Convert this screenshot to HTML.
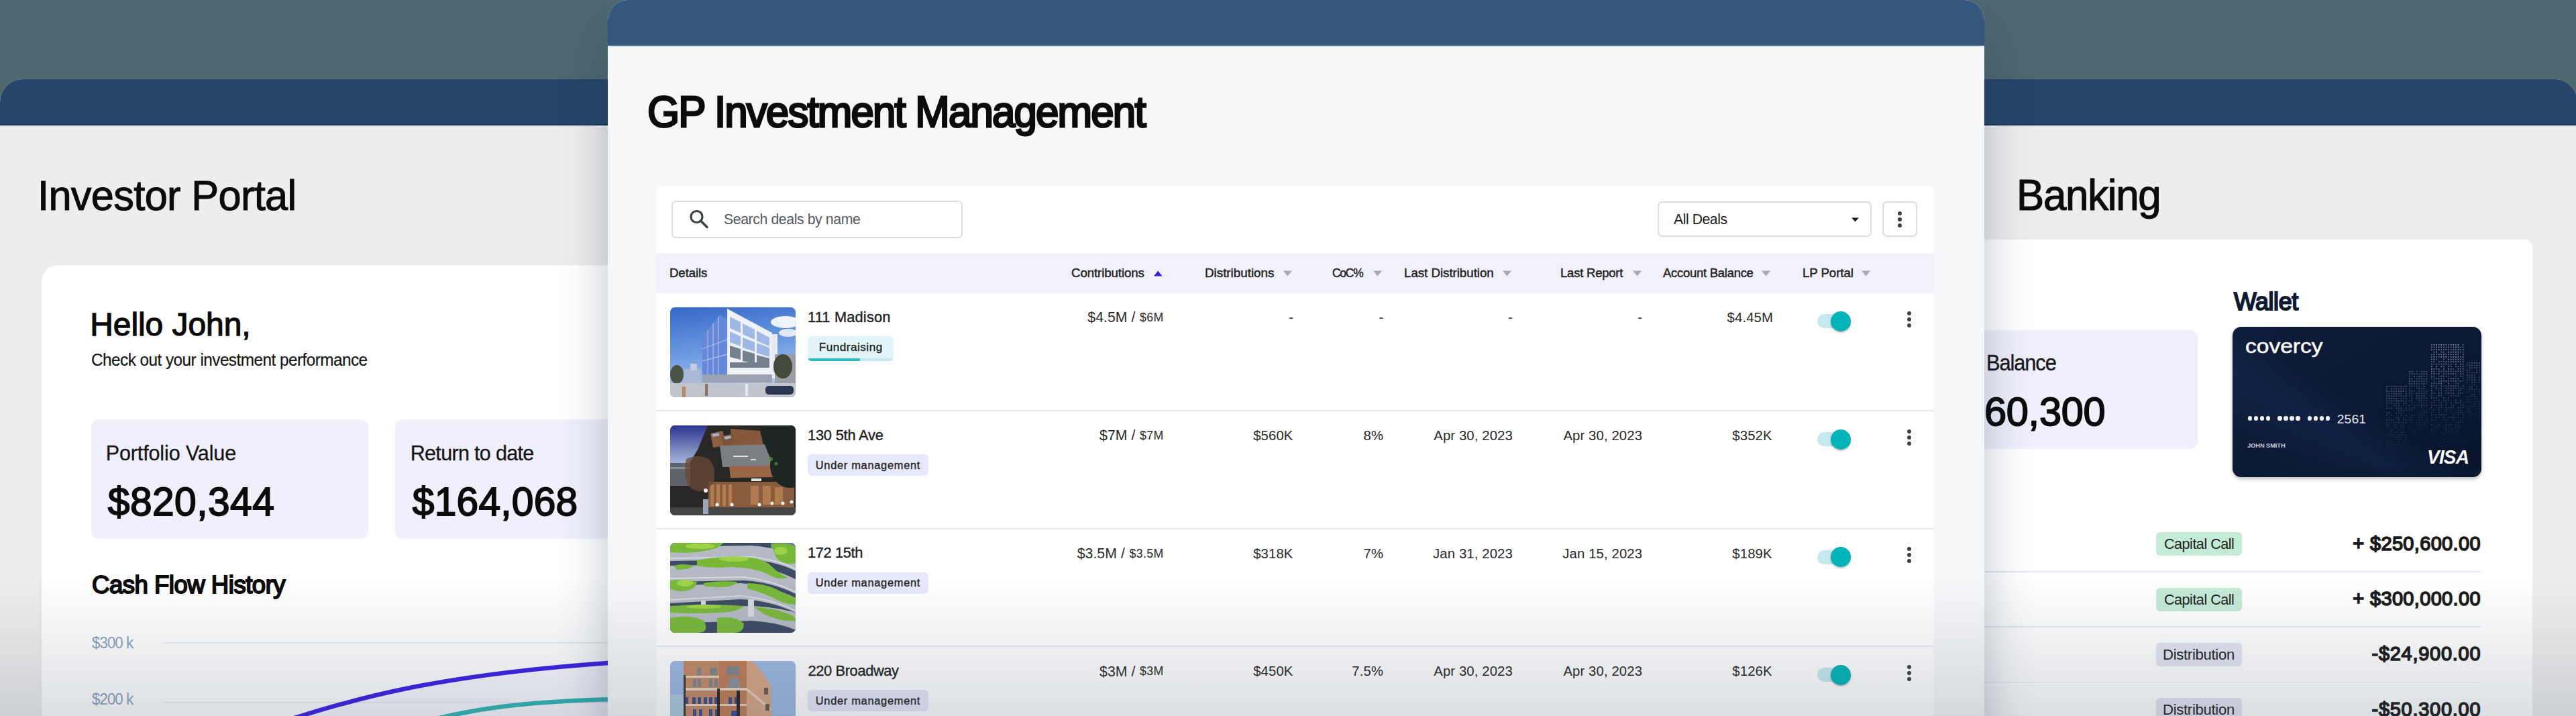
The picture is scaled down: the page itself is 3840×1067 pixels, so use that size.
<!DOCTYPE html><html><head><meta charset="utf-8"><title>GP Investment Management</title><style>
*{margin:0;padding:0;box-sizing:border-box}
html,body{width:3840px;height:1067px;overflow:hidden;background:#4e6870;font-family:"Liberation Sans",sans-serif}
.a{position:absolute}
.t{position:absolute;line-height:1;white-space:nowrap;font-family:"Liberation Sans",sans-serif}
svg{display:block}
</style></head><body>
<div class="a" style="left:0;top:118px;width:3842px;height:1000px;border-radius:34px 34px 0 0;background:#ededed;overflow:hidden"><div class="a" style="left:0;top:0;width:3842px;height:68px;background:#274569"></div><div class="a" style="left:0;top:67px;width:3842px;height:1.5px;background:#1c3454"></div></div>
<div class="a" style="left:62px;top:395px;width:900px;height:720px;border-radius:24px;background:#fff;box-shadow:0 0 3px rgba(0,0,0,0.06)"></div>
<div class="t" style="left:56.42px;top:259.54px;font-size:62.79px;letter-spacing:-0.667px;transform:scaleX(0.9764);transform-origin:0 0;color:#0b0b0b;-webkit-text-stroke:1.1px #0b0b0b">Investor Portal</div>
<div class="t" style="left:134.21px;top:460.39px;font-size:47.97px;letter-spacing:-0.061px;color:#0b0b0b;-webkit-text-stroke:1.3px #0b0b0b">Hello John,</div>
<div class="t" style="left:135.88px;top:523.96px;font-size:25.44px;letter-spacing:-0.551px;transform:scaleX(0.9558);transform-origin:0 0;color:#151515;-webkit-text-stroke:0.2px #151515">Check out your investment performance</div>
<div class="a" style="left:136px;top:625px;width:413px;height:178px;border-radius:12px;background:#f0f0fc"></div>
<div class="a" style="left:589px;top:625px;width:413px;height:178px;border-radius:12px;background:#f0f0fc"></div>
<div class="t" style="left:157.71px;top:659.96px;font-size:30.52px;letter-spacing:-0.125px;color:#151515;-webkit-text-stroke:0.3px #151515">Portfolio Value</div>
<div class="t" style="left:160.81px;top:719.27px;font-size:58.74px;letter-spacing:0.444px;color:#0b0b0b;-webkit-text-stroke:1.8px #0b0b0b">$820,344</div>
<div class="t" style="left:611.71px;top:659.96px;font-size:30.52px;letter-spacing:-0.681px;color:#151515;-webkit-text-stroke:0.3px #151515">Return to date</div>
<div class="t" style="left:614.81px;top:719.27px;font-size:58.74px;letter-spacing:0.199px;color:#0b0b0b;-webkit-text-stroke:1.8px #0b0b0b">$164,068</div>
<div class="t" style="left:137.15px;top:853.07px;font-size:37.35px;letter-spacing:-0.451px;transform:scaleX(0.9762);transform-origin:0 0;color:#0b0b0b;-webkit-text-stroke:2.0px #0b0b0b">Cash Flow History</div>
<div class="t" style="left:136.78px;top:945.69px;font-size:23.98px;letter-spacing:-1.019px;transform:scaleX(0.9291);transform-origin:0 0;color:#8ea2c0">$300 k</div>
<div class="t" style="left:136.78px;top:1029.69px;font-size:23.98px;letter-spacing:-1.019px;transform:scaleX(0.9291);transform-origin:0 0;color:#8ea2c0">$200 k</div>
<div class="a" style="left:244px;top:957px;width:700px;height:1.5px;background:#ecedf2"></div>
<div class="a" style="left:244px;top:1046px;width:700px;height:1.5px;background:#ecedf2"></div>
<svg class="a" style="left:0;top:0" width="1000" height="1067" viewBox="0 0 1000 1067"><path d="M408 1080 C 528 1040, 655 1005, 920 987 L920 1080 Z" fill="#ebe8fb" opacity="0.3"/><path d="M408 1080 C 528 1040, 655 1005, 920 987" fill="none" stroke="#3b1ee6" stroke-width="6.5"/><path d="M615 1080 C 705 1055, 785 1045, 920 1042" fill="none" stroke="#2fb5b5" stroke-width="6.5"/></svg>
<div class="a" style="left:2900px;top:357px;width:875px;height:760px;border-radius:12px;background:#fff"></div>
<div class="t" style="left:3005.64px;top:259.65px;font-size:63.95px;letter-spacing:-1.282px;transform:scaleX(0.9655);transform-origin:0 0;color:#0b0b0b;-webkit-text-stroke:1.2px #0b0b0b">Banking</div>
<div class="a" style="left:2850px;top:492px;width:426px;height:177px;border-radius:12px;background:#f0f0fc"></div>
<div class="t" style="left:2960.67px;top:524.79px;font-size:32.85px;letter-spacing:-1.173px;transform:scaleX(0.9388);transform-origin:0 0;color:#151515;-webkit-text-stroke:0.3px #151515">Balance</div>
<div class="t" style="left:2957.52px;top:584.30px;font-size:59.89px;letter-spacing:-0.257px;transform:scaleX(0.9929);transform-origin:0 0;color:#0b0b0b;-webkit-text-stroke:1.8px #0b0b0b">60,300</div>
<div class="t" style="left:3329.80px;top:431.61px;font-size:36.48px;letter-spacing:-0.394px;transform:scaleX(0.9806);transform-origin:0 0;color:#0f1a30;-webkit-text-stroke:2.0px #0f1a30">Wallet</div>
<div class="a" style="left:3328px;top:487px;width:371px;height:224px;border-radius:13px;box-shadow:0 3px 5px rgba(0,0,0,0.25);overflow:hidden"><svg width="371" height="224" viewBox="0 0 371 224">
<defs><linearGradient id="cg" x1="0" y1="0" x2="1" y2="1"><stop offset="0" stop-color="#0e1d3a"/><stop offset="1" stop-color="#09142c"/></linearGradient>
<linearGradient id="cs" x1="0" y1="1" x2="1" y2="0"><stop offset="0.1" stop-color="#1c3466" stop-opacity="0"/><stop offset="0.35" stop-color="#1c3466" stop-opacity="0.3"/><stop offset="0.5" stop-color="#1c3466" stop-opacity="0"/></linearGradient></defs>
<rect width="371" height="224" fill="url(#cg)"/>
<rect width="371" height="224" fill="url(#cs)"/>
<g fill="#9db0cc"><rect x="229.0" y="88.0" width="1.7" height="1.7" opacity="0.36"/><rect x="232.6" y="88.0" width="1.7" height="1.7" opacity="0.35"/><rect x="236.2" y="88.0" width="1.7" height="1.7" opacity="0.41"/><rect x="239.8" y="88.0" width="1.7" height="1.7" opacity="0.44"/><rect x="243.4" y="88.0" width="1.7" height="1.7" opacity="0.43"/><rect x="247.0" y="88.0" width="1.7" height="1.7" opacity="0.35"/><rect x="250.6" y="88.0" width="1.7" height="1.7" opacity="0.51"/><rect x="254.2" y="88.0" width="1.7" height="1.7" opacity="0.38"/><rect x="257.8" y="88.0" width="1.7" height="1.7" opacity="0.54"/><rect x="229.0" y="91.6" width="1.7" height="1.7" opacity="0.41"/><rect x="236.2" y="91.6" width="1.7" height="1.7" opacity="0.50"/><rect x="239.8" y="91.6" width="1.7" height="1.7" opacity="0.35"/><rect x="243.4" y="91.6" width="1.7" height="1.7" opacity="0.39"/><rect x="247.0" y="91.6" width="1.7" height="1.7" opacity="0.36"/><rect x="250.6" y="91.6" width="1.7" height="1.7" opacity="0.46"/><rect x="254.2" y="91.6" width="1.7" height="1.7" opacity="0.44"/><rect x="257.8" y="91.6" width="1.7" height="1.7" opacity="0.33"/><rect x="229.0" y="95.2" width="1.7" height="1.7" opacity="0.45"/><rect x="232.6" y="95.2" width="1.7" height="1.7" opacity="0.38"/><rect x="236.2" y="95.2" width="1.7" height="1.7" opacity="0.40"/><rect x="239.8" y="95.2" width="1.7" height="1.7" opacity="0.48"/><rect x="243.4" y="95.2" width="1.7" height="1.7" opacity="0.36"/><rect x="247.0" y="95.2" width="1.7" height="1.7" opacity="0.42"/><rect x="250.6" y="95.2" width="1.7" height="1.7" opacity="0.46"/><rect x="254.2" y="95.2" width="1.7" height="1.7" opacity="0.51"/><rect x="257.8" y="95.2" width="1.7" height="1.7" opacity="0.40"/><rect x="229.0" y="98.8" width="1.7" height="1.7" opacity="0.33"/><rect x="232.6" y="98.8" width="1.7" height="1.7" opacity="0.31"/><rect x="236.2" y="98.8" width="1.7" height="1.7" opacity="0.45"/><rect x="239.8" y="98.8" width="1.7" height="1.7" opacity="0.48"/><rect x="243.4" y="98.8" width="1.7" height="1.7" opacity="0.44"/><rect x="247.0" y="98.8" width="1.7" height="1.7" opacity="0.42"/><rect x="250.6" y="98.8" width="1.7" height="1.7" opacity="0.47"/><rect x="257.8" y="98.8" width="1.7" height="1.7" opacity="0.43"/><rect x="229.0" y="102.4" width="1.7" height="1.7" opacity="0.42"/><rect x="232.6" y="102.4" width="1.7" height="1.7" opacity="0.48"/><rect x="236.2" y="102.4" width="1.7" height="1.7" opacity="0.34"/><rect x="239.8" y="102.4" width="1.7" height="1.7" opacity="0.42"/><rect x="243.4" y="102.4" width="1.7" height="1.7" opacity="0.38"/><rect x="247.0" y="102.4" width="1.7" height="1.7" opacity="0.31"/><rect x="250.6" y="102.4" width="1.7" height="1.7" opacity="0.44"/><rect x="254.2" y="102.4" width="1.7" height="1.7" opacity="0.34"/><rect x="257.8" y="102.4" width="1.7" height="1.7" opacity="0.46"/><rect x="229.0" y="106.0" width="1.7" height="1.7" opacity="0.36"/><rect x="232.6" y="106.0" width="1.7" height="1.7" opacity="0.44"/><rect x="236.2" y="106.0" width="1.7" height="1.7" opacity="0.44"/><rect x="239.8" y="106.0" width="1.7" height="1.7" opacity="0.36"/><rect x="243.4" y="106.0" width="1.7" height="1.7" opacity="0.44"/><rect x="250.6" y="106.0" width="1.7" height="1.7" opacity="0.31"/><rect x="254.2" y="106.0" width="1.7" height="1.7" opacity="0.32"/><rect x="257.8" y="106.0" width="1.7" height="1.7" opacity="0.39"/><rect x="229.0" y="109.6" width="1.7" height="1.7" opacity="0.27"/><rect x="232.6" y="109.6" width="1.7" height="1.7" opacity="0.33"/><rect x="236.2" y="109.6" width="1.7" height="1.7" opacity="0.44"/><rect x="239.8" y="109.6" width="1.7" height="1.7" opacity="0.36"/><rect x="243.4" y="109.6" width="1.7" height="1.7" opacity="0.39"/><rect x="247.0" y="109.6" width="1.7" height="1.7" opacity="0.43"/><rect x="250.6" y="109.6" width="1.7" height="1.7" opacity="0.42"/><rect x="254.2" y="109.6" width="1.7" height="1.7" opacity="0.34"/><rect x="257.8" y="109.6" width="1.7" height="1.7" opacity="0.29"/><rect x="229.0" y="113.2" width="1.7" height="1.7" opacity="0.27"/><rect x="232.6" y="113.2" width="1.7" height="1.7" opacity="0.29"/><rect x="236.2" y="113.2" width="1.7" height="1.7" opacity="0.32"/><rect x="239.8" y="113.2" width="1.7" height="1.7" opacity="0.26"/><rect x="243.4" y="113.2" width="1.7" height="1.7" opacity="0.28"/><rect x="247.0" y="113.2" width="1.7" height="1.7" opacity="0.26"/><rect x="254.2" y="113.2" width="1.7" height="1.7" opacity="0.28"/><rect x="257.8" y="113.2" width="1.7" height="1.7" opacity="0.32"/><rect x="229.0" y="116.8" width="1.7" height="1.7" opacity="0.27"/><rect x="239.8" y="116.8" width="1.7" height="1.7" opacity="0.33"/><rect x="243.4" y="116.8" width="1.7" height="1.7" opacity="0.26"/><rect x="247.0" y="116.8" width="1.7" height="1.7" opacity="0.29"/><rect x="254.2" y="116.8" width="1.7" height="1.7" opacity="0.25"/><rect x="229.0" y="120.4" width="1.7" height="1.7" opacity="0.26"/><rect x="232.6" y="120.4" width="1.7" height="1.7" opacity="0.24"/><rect x="236.2" y="120.4" width="1.7" height="1.7" opacity="0.39"/><rect x="243.4" y="120.4" width="1.7" height="1.7" opacity="0.28"/><rect x="247.0" y="120.4" width="1.7" height="1.7" opacity="0.26"/><rect x="250.6" y="120.4" width="1.7" height="1.7" opacity="0.32"/><rect x="257.8" y="120.4" width="1.7" height="1.7" opacity="0.27"/><rect x="247.0" y="124.0" width="1.7" height="1.7" opacity="0.26"/><rect x="250.6" y="124.0" width="1.7" height="1.7" opacity="0.28"/><rect x="254.2" y="124.0" width="1.7" height="1.7" opacity="0.23"/><rect x="257.8" y="124.0" width="1.7" height="1.7" opacity="0.27"/><rect x="229.0" y="127.6" width="1.7" height="1.7" opacity="0.35"/><rect x="232.6" y="127.6" width="1.7" height="1.7" opacity="0.35"/><rect x="243.4" y="127.6" width="1.7" height="1.7" opacity="0.25"/><rect x="247.0" y="127.6" width="1.7" height="1.7" opacity="0.24"/><rect x="250.6" y="127.6" width="1.7" height="1.7" opacity="0.31"/><rect x="229.0" y="131.2" width="1.7" height="1.7" opacity="0.29"/><rect x="236.2" y="131.2" width="1.7" height="1.7" opacity="0.30"/><rect x="250.6" y="131.2" width="1.7" height="1.7" opacity="0.23"/><rect x="257.8" y="131.2" width="1.7" height="1.7" opacity="0.31"/><rect x="232.6" y="134.8" width="1.7" height="1.7" opacity="0.25"/><rect x="243.4" y="134.8" width="1.7" height="1.7" opacity="0.21"/><rect x="247.0" y="134.8" width="1.7" height="1.7" opacity="0.31"/><rect x="254.2" y="134.8" width="1.7" height="1.7" opacity="0.30"/><rect x="229.0" y="138.4" width="1.7" height="1.7" opacity="0.23"/><rect x="232.6" y="138.4" width="1.7" height="1.7" opacity="0.20"/><rect x="236.2" y="138.4" width="1.7" height="1.7" opacity="0.30"/><rect x="239.8" y="138.4" width="1.7" height="1.7" opacity="0.25"/><rect x="247.0" y="138.4" width="1.7" height="1.7" opacity="0.29"/><rect x="254.2" y="138.4" width="1.7" height="1.7" opacity="0.22"/><rect x="257.8" y="138.4" width="1.7" height="1.7" opacity="0.21"/><rect x="229.0" y="142.0" width="1.7" height="1.7" opacity="0.20"/><rect x="232.6" y="142.0" width="1.7" height="1.7" opacity="0.19"/><rect x="239.8" y="142.0" width="1.7" height="1.7" opacity="0.23"/><rect x="243.4" y="142.0" width="1.7" height="1.7" opacity="0.28"/><rect x="247.0" y="142.0" width="1.7" height="1.7" opacity="0.28"/><rect x="250.6" y="142.0" width="1.7" height="1.7" opacity="0.24"/><rect x="254.2" y="142.0" width="1.7" height="1.7" opacity="0.18"/><rect x="257.8" y="142.0" width="1.7" height="1.7" opacity="0.19"/><rect x="229.0" y="145.6" width="1.7" height="1.7" opacity="0.25"/><rect x="232.6" y="145.6" width="1.7" height="1.7" opacity="0.21"/><rect x="239.8" y="145.6" width="1.7" height="1.7" opacity="0.20"/><rect x="243.4" y="145.6" width="1.7" height="1.7" opacity="0.22"/><rect x="250.6" y="145.6" width="1.7" height="1.7" opacity="0.22"/><rect x="254.2" y="145.6" width="1.7" height="1.7" opacity="0.19"/><rect x="229.0" y="149.2" width="1.7" height="1.7" opacity="0.21"/><rect x="239.8" y="149.2" width="1.7" height="1.7" opacity="0.21"/><rect x="243.4" y="149.2" width="1.7" height="1.7" opacity="0.20"/><rect x="250.6" y="149.2" width="1.7" height="1.7" opacity="0.21"/><rect x="254.2" y="149.2" width="1.7" height="1.7" opacity="0.25"/><rect x="236.2" y="152.8" width="1.7" height="1.7" opacity="0.19"/><rect x="247.0" y="152.8" width="1.7" height="1.7" opacity="0.15"/><rect x="250.6" y="152.8" width="1.7" height="1.7" opacity="0.15"/><rect x="254.2" y="152.8" width="1.7" height="1.7" opacity="0.15"/><rect x="236.2" y="156.4" width="1.7" height="1.7" opacity="0.19"/><rect x="243.4" y="156.4" width="1.7" height="1.7" opacity="0.21"/><rect x="250.6" y="156.4" width="1.7" height="1.7" opacity="0.21"/><rect x="254.2" y="156.4" width="1.7" height="1.7" opacity="0.17"/><rect x="232.6" y="160.0" width="1.7" height="1.7" opacity="0.16"/><rect x="236.2" y="160.0" width="1.7" height="1.7" opacity="0.15"/><rect x="239.8" y="160.0" width="1.7" height="1.7" opacity="0.15"/><rect x="247.0" y="160.0" width="1.7" height="1.7" opacity="0.17"/><rect x="250.6" y="160.0" width="1.7" height="1.7" opacity="0.12"/><rect x="254.2" y="160.0" width="1.7" height="1.7" opacity="0.17"/><rect x="257.8" y="160.0" width="1.7" height="1.7" opacity="0.13"/><rect x="239.8" y="163.6" width="1.7" height="1.7" opacity="0.13"/><rect x="243.4" y="163.6" width="1.7" height="1.7" opacity="0.17"/><rect x="247.0" y="163.6" width="1.7" height="1.7" opacity="0.12"/><rect x="250.6" y="163.6" width="1.7" height="1.7" opacity="0.18"/><rect x="257.8" y="163.6" width="1.7" height="1.7" opacity="0.12"/><rect x="239.8" y="167.2" width="1.7" height="1.7" opacity="0.10"/><rect x="247.0" y="167.2" width="1.7" height="1.7" opacity="0.10"/><rect x="229.0" y="170.8" width="1.7" height="1.7" opacity="0.14"/><rect x="232.6" y="170.8" width="1.7" height="1.7" opacity="0.14"/><rect x="236.2" y="170.8" width="1.7" height="1.7" opacity="0.11"/><rect x="247.0" y="170.8" width="1.7" height="1.7" opacity="0.10"/><rect x="254.2" y="170.8" width="1.7" height="1.7" opacity="0.10"/><rect x="257.8" y="170.8" width="1.7" height="1.7" opacity="0.09"/><rect x="229.0" y="174.4" width="1.7" height="1.7" opacity="0.10"/><rect x="232.6" y="174.4" width="1.7" height="1.7" opacity="0.12"/><rect x="236.2" y="174.4" width="1.7" height="1.7" opacity="0.10"/><rect x="239.8" y="174.4" width="1.7" height="1.7" opacity="0.10"/><rect x="243.4" y="174.4" width="1.7" height="1.7" opacity="0.09"/><rect x="247.0" y="174.4" width="1.7" height="1.7" opacity="0.12"/><rect x="254.2" y="174.4" width="1.7" height="1.7" opacity="0.10"/><rect x="229.0" y="178.0" width="1.7" height="1.7" opacity="0.11"/><rect x="232.6" y="178.0" width="1.7" height="1.7" opacity="0.09"/><rect x="239.8" y="178.0" width="1.7" height="1.7" opacity="0.09"/><rect x="250.6" y="178.0" width="1.7" height="1.7" opacity="0.11"/><rect x="229.0" y="181.6" width="1.7" height="1.7" opacity="0.07"/><rect x="232.6" y="181.6" width="1.7" height="1.7" opacity="0.06"/><rect x="236.2" y="181.6" width="1.7" height="1.7" opacity="0.09"/><rect x="239.8" y="181.6" width="1.7" height="1.7" opacity="0.06"/><rect x="243.4" y="181.6" width="1.7" height="1.7" opacity="0.09"/><rect x="254.2" y="181.6" width="1.7" height="1.7" opacity="0.07"/><rect x="257.8" y="181.6" width="1.7" height="1.7" opacity="0.08"/><rect x="263.0" y="66.0" width="1.7" height="1.7" opacity="0.48"/><rect x="266.6" y="66.0" width="1.7" height="1.7" opacity="0.60"/><rect x="273.8" y="66.0" width="1.7" height="1.7" opacity="0.43"/><rect x="281.0" y="66.0" width="1.7" height="1.7" opacity="0.46"/><rect x="284.6" y="66.0" width="1.7" height="1.7" opacity="0.46"/><rect x="288.2" y="66.0" width="1.7" height="1.7" opacity="0.49"/><rect x="263.0" y="69.6" width="1.7" height="1.7" opacity="0.48"/><rect x="266.6" y="69.6" width="1.7" height="1.7" opacity="0.42"/><rect x="270.2" y="69.6" width="1.7" height="1.7" opacity="0.45"/><rect x="273.8" y="69.6" width="1.7" height="1.7" opacity="0.36"/><rect x="277.4" y="69.6" width="1.7" height="1.7" opacity="0.41"/><rect x="281.0" y="69.6" width="1.7" height="1.7" opacity="0.48"/><rect x="284.6" y="69.6" width="1.7" height="1.7" opacity="0.51"/><rect x="288.2" y="69.6" width="1.7" height="1.7" opacity="0.56"/><rect x="263.0" y="73.2" width="1.7" height="1.7" opacity="0.42"/><rect x="270.2" y="73.2" width="1.7" height="1.7" opacity="0.51"/><rect x="273.8" y="73.2" width="1.7" height="1.7" opacity="0.35"/><rect x="277.4" y="73.2" width="1.7" height="1.7" opacity="0.55"/><rect x="281.0" y="73.2" width="1.7" height="1.7" opacity="0.51"/><rect x="284.6" y="73.2" width="1.7" height="1.7" opacity="0.38"/><rect x="288.2" y="73.2" width="1.7" height="1.7" opacity="0.46"/><rect x="263.0" y="76.8" width="1.7" height="1.7" opacity="0.51"/><rect x="266.6" y="76.8" width="1.7" height="1.7" opacity="0.46"/><rect x="273.8" y="76.8" width="1.7" height="1.7" opacity="0.48"/><rect x="277.4" y="76.8" width="1.7" height="1.7" opacity="0.34"/><rect x="281.0" y="76.8" width="1.7" height="1.7" opacity="0.41"/><rect x="284.6" y="76.8" width="1.7" height="1.7" opacity="0.52"/><rect x="288.2" y="76.8" width="1.7" height="1.7" opacity="0.47"/><rect x="263.0" y="80.4" width="1.7" height="1.7" opacity="0.46"/><rect x="266.6" y="80.4" width="1.7" height="1.7" opacity="0.32"/><rect x="270.2" y="80.4" width="1.7" height="1.7" opacity="0.48"/><rect x="273.8" y="80.4" width="1.7" height="1.7" opacity="0.43"/><rect x="277.4" y="80.4" width="1.7" height="1.7" opacity="0.33"/><rect x="281.0" y="80.4" width="1.7" height="1.7" opacity="0.37"/><rect x="284.6" y="80.4" width="1.7" height="1.7" opacity="0.38"/><rect x="288.2" y="80.4" width="1.7" height="1.7" opacity="0.36"/><rect x="263.0" y="84.0" width="1.7" height="1.7" opacity="0.51"/><rect x="266.6" y="84.0" width="1.7" height="1.7" opacity="0.38"/><rect x="270.2" y="84.0" width="1.7" height="1.7" opacity="0.45"/><rect x="273.8" y="84.0" width="1.7" height="1.7" opacity="0.43"/><rect x="277.4" y="84.0" width="1.7" height="1.7" opacity="0.32"/><rect x="281.0" y="84.0" width="1.7" height="1.7" opacity="0.36"/><rect x="284.6" y="84.0" width="1.7" height="1.7" opacity="0.37"/><rect x="288.2" y="84.0" width="1.7" height="1.7" opacity="0.31"/><rect x="263.0" y="87.6" width="1.7" height="1.7" opacity="0.35"/><rect x="266.6" y="87.6" width="1.7" height="1.7" opacity="0.43"/><rect x="270.2" y="87.6" width="1.7" height="1.7" opacity="0.35"/><rect x="273.8" y="87.6" width="1.7" height="1.7" opacity="0.39"/><rect x="277.4" y="87.6" width="1.7" height="1.7" opacity="0.32"/><rect x="284.6" y="87.6" width="1.7" height="1.7" opacity="0.49"/><rect x="263.0" y="91.2" width="1.7" height="1.7" opacity="0.37"/><rect x="273.8" y="91.2" width="1.7" height="1.7" opacity="0.33"/><rect x="277.4" y="91.2" width="1.7" height="1.7" opacity="0.46"/><rect x="281.0" y="91.2" width="1.7" height="1.7" opacity="0.39"/><rect x="284.6" y="91.2" width="1.7" height="1.7" opacity="0.38"/><rect x="263.0" y="94.8" width="1.7" height="1.7" opacity="0.42"/><rect x="266.6" y="94.8" width="1.7" height="1.7" opacity="0.43"/><rect x="270.2" y="94.8" width="1.7" height="1.7" opacity="0.31"/><rect x="277.4" y="94.8" width="1.7" height="1.7" opacity="0.27"/><rect x="281.0" y="94.8" width="1.7" height="1.7" opacity="0.36"/><rect x="284.6" y="94.8" width="1.7" height="1.7" opacity="0.32"/><rect x="288.2" y="94.8" width="1.7" height="1.7" opacity="0.33"/><rect x="263.0" y="98.4" width="1.7" height="1.7" opacity="0.40"/><rect x="266.6" y="98.4" width="1.7" height="1.7" opacity="0.39"/><rect x="273.8" y="98.4" width="1.7" height="1.7" opacity="0.42"/><rect x="277.4" y="98.4" width="1.7" height="1.7" opacity="0.41"/><rect x="281.0" y="98.4" width="1.7" height="1.7" opacity="0.32"/><rect x="284.6" y="98.4" width="1.7" height="1.7" opacity="0.43"/><rect x="288.2" y="98.4" width="1.7" height="1.7" opacity="0.32"/><rect x="263.0" y="102.0" width="1.7" height="1.7" opacity="0.29"/><rect x="266.6" y="102.0" width="1.7" height="1.7" opacity="0.26"/><rect x="273.8" y="102.0" width="1.7" height="1.7" opacity="0.40"/><rect x="277.4" y="102.0" width="1.7" height="1.7" opacity="0.29"/><rect x="281.0" y="102.0" width="1.7" height="1.7" opacity="0.28"/><rect x="284.6" y="102.0" width="1.7" height="1.7" opacity="0.40"/><rect x="266.6" y="105.6" width="1.7" height="1.7" opacity="0.37"/><rect x="273.8" y="105.6" width="1.7" height="1.7" opacity="0.34"/><rect x="277.4" y="105.6" width="1.7" height="1.7" opacity="0.35"/><rect x="281.0" y="105.6" width="1.7" height="1.7" opacity="0.35"/><rect x="284.6" y="105.6" width="1.7" height="1.7" opacity="0.28"/><rect x="288.2" y="105.6" width="1.7" height="1.7" opacity="0.38"/><rect x="263.0" y="109.2" width="1.7" height="1.7" opacity="0.29"/><rect x="266.6" y="109.2" width="1.7" height="1.7" opacity="0.26"/><rect x="277.4" y="109.2" width="1.7" height="1.7" opacity="0.32"/><rect x="281.0" y="109.2" width="1.7" height="1.7" opacity="0.30"/><rect x="284.6" y="109.2" width="1.7" height="1.7" opacity="0.24"/><rect x="288.2" y="109.2" width="1.7" height="1.7" opacity="0.25"/><rect x="266.6" y="112.8" width="1.7" height="1.7" opacity="0.24"/><rect x="277.4" y="112.8" width="1.7" height="1.7" opacity="0.23"/><rect x="281.0" y="112.8" width="1.7" height="1.7" opacity="0.22"/><rect x="284.6" y="112.8" width="1.7" height="1.7" opacity="0.22"/><rect x="288.2" y="112.8" width="1.7" height="1.7" opacity="0.24"/><rect x="263.0" y="116.4" width="1.7" height="1.7" opacity="0.31"/><rect x="270.2" y="116.4" width="1.7" height="1.7" opacity="0.25"/><rect x="273.8" y="116.4" width="1.7" height="1.7" opacity="0.24"/><rect x="277.4" y="116.4" width="1.7" height="1.7" opacity="0.20"/><rect x="281.0" y="116.4" width="1.7" height="1.7" opacity="0.32"/><rect x="284.6" y="116.4" width="1.7" height="1.7" opacity="0.26"/><rect x="288.2" y="116.4" width="1.7" height="1.7" opacity="0.31"/><rect x="263.0" y="120.0" width="1.7" height="1.7" opacity="0.22"/><rect x="266.6" y="120.0" width="1.7" height="1.7" opacity="0.23"/><rect x="270.2" y="120.0" width="1.7" height="1.7" opacity="0.30"/><rect x="281.0" y="120.0" width="1.7" height="1.7" opacity="0.19"/><rect x="263.0" y="123.6" width="1.7" height="1.7" opacity="0.24"/><rect x="266.6" y="123.6" width="1.7" height="1.7" opacity="0.22"/><rect x="284.6" y="123.6" width="1.7" height="1.7" opacity="0.18"/><rect x="288.2" y="123.6" width="1.7" height="1.7" opacity="0.23"/><rect x="281.0" y="127.2" width="1.7" height="1.7" opacity="0.22"/><rect x="284.6" y="127.2" width="1.7" height="1.7" opacity="0.24"/><rect x="288.2" y="127.2" width="1.7" height="1.7" opacity="0.26"/><rect x="266.6" y="130.8" width="1.7" height="1.7" opacity="0.16"/><rect x="270.2" y="130.8" width="1.7" height="1.7" opacity="0.21"/><rect x="277.4" y="130.8" width="1.7" height="1.7" opacity="0.15"/><rect x="281.0" y="130.8" width="1.7" height="1.7" opacity="0.20"/><rect x="284.6" y="130.8" width="1.7" height="1.7" opacity="0.17"/><rect x="263.0" y="134.4" width="1.7" height="1.7" opacity="0.16"/><rect x="266.6" y="134.4" width="1.7" height="1.7" opacity="0.22"/><rect x="277.4" y="134.4" width="1.7" height="1.7" opacity="0.15"/><rect x="281.0" y="134.4" width="1.7" height="1.7" opacity="0.22"/><rect x="288.2" y="134.4" width="1.7" height="1.7" opacity="0.14"/><rect x="263.0" y="138.0" width="1.7" height="1.7" opacity="0.18"/><rect x="266.6" y="138.0" width="1.7" height="1.7" opacity="0.14"/><rect x="277.4" y="138.0" width="1.7" height="1.7" opacity="0.12"/><rect x="281.0" y="138.0" width="1.7" height="1.7" opacity="0.16"/><rect x="288.2" y="138.0" width="1.7" height="1.7" opacity="0.19"/><rect x="266.6" y="141.6" width="1.7" height="1.7" opacity="0.12"/><rect x="273.8" y="141.6" width="1.7" height="1.7" opacity="0.17"/><rect x="277.4" y="141.6" width="1.7" height="1.7" opacity="0.13"/><rect x="284.6" y="141.6" width="1.7" height="1.7" opacity="0.18"/><rect x="288.2" y="141.6" width="1.7" height="1.7" opacity="0.12"/><rect x="263.0" y="145.2" width="1.7" height="1.7" opacity="0.12"/><rect x="273.8" y="145.2" width="1.7" height="1.7" opacity="0.12"/><rect x="277.4" y="145.2" width="1.7" height="1.7" opacity="0.16"/><rect x="281.0" y="145.2" width="1.7" height="1.7" opacity="0.10"/><rect x="284.6" y="145.2" width="1.7" height="1.7" opacity="0.12"/><rect x="277.4" y="148.8" width="1.7" height="1.7" opacity="0.09"/><rect x="288.2" y="148.8" width="1.7" height="1.7" opacity="0.12"/><rect x="263.0" y="152.4" width="1.7" height="1.7" opacity="0.09"/><rect x="266.6" y="152.4" width="1.7" height="1.7" opacity="0.08"/><rect x="270.2" y="152.4" width="1.7" height="1.7" opacity="0.09"/><rect x="273.8" y="152.4" width="1.7" height="1.7" opacity="0.12"/><rect x="277.4" y="152.4" width="1.7" height="1.7" opacity="0.12"/><rect x="281.0" y="152.4" width="1.7" height="1.7" opacity="0.09"/><rect x="263.0" y="156.0" width="1.7" height="1.7" opacity="0.06"/><rect x="270.2" y="156.0" width="1.7" height="1.7" opacity="0.10"/><rect x="273.8" y="156.0" width="1.7" height="1.7" opacity="0.07"/><rect x="281.0" y="156.0" width="1.7" height="1.7" opacity="0.08"/><rect x="296.0" y="26.0" width="1.7" height="1.7" opacity="0.57"/><rect x="299.6" y="26.0" width="1.7" height="1.7" opacity="0.90"/><rect x="303.2" y="26.0" width="1.7" height="1.7" opacity="0.83"/><rect x="306.8" y="26.0" width="1.7" height="1.7" opacity="0.68"/><rect x="310.4" y="26.0" width="1.7" height="1.7" opacity="0.91"/><rect x="314.0" y="26.0" width="1.7" height="1.7" opacity="0.65"/><rect x="317.6" y="26.0" width="1.7" height="1.7" opacity="0.67"/><rect x="321.2" y="26.0" width="1.7" height="1.7" opacity="0.56"/><rect x="324.8" y="26.0" width="1.7" height="1.7" opacity="0.89"/><rect x="328.4" y="26.0" width="1.7" height="1.7" opacity="0.90"/><rect x="332.0" y="26.0" width="1.7" height="1.7" opacity="0.64"/><rect x="335.6" y="26.0" width="1.7" height="1.7" opacity="0.91"/><rect x="342.8" y="26.0" width="1.7" height="1.7" opacity="0.65"/><rect x="296.0" y="29.6" width="1.7" height="1.7" opacity="0.72"/><rect x="299.6" y="29.6" width="1.7" height="1.7" opacity="0.61"/><rect x="303.2" y="29.6" width="1.7" height="1.7" opacity="0.81"/><rect x="306.8" y="29.6" width="1.7" height="1.7" opacity="0.82"/><rect x="310.4" y="29.6" width="1.7" height="1.7" opacity="0.66"/><rect x="314.0" y="29.6" width="1.7" height="1.7" opacity="0.67"/><rect x="317.6" y="29.6" width="1.7" height="1.7" opacity="0.57"/><rect x="321.2" y="29.6" width="1.7" height="1.7" opacity="0.82"/><rect x="324.8" y="29.6" width="1.7" height="1.7" opacity="0.57"/><rect x="328.4" y="29.6" width="1.7" height="1.7" opacity="0.74"/><rect x="332.0" y="29.6" width="1.7" height="1.7" opacity="0.90"/><rect x="335.6" y="29.6" width="1.7" height="1.7" opacity="0.90"/><rect x="339.2" y="29.6" width="1.7" height="1.7" opacity="0.57"/><rect x="342.8" y="29.6" width="1.7" height="1.7" opacity="0.72"/><rect x="296.0" y="33.2" width="1.7" height="1.7" opacity="0.69"/><rect x="299.6" y="33.2" width="1.7" height="1.7" opacity="0.68"/><rect x="303.2" y="33.2" width="1.7" height="1.7" opacity="0.77"/><rect x="306.8" y="33.2" width="1.7" height="1.7" opacity="0.83"/><rect x="310.4" y="33.2" width="1.7" height="1.7" opacity="0.57"/><rect x="314.0" y="33.2" width="1.7" height="1.7" opacity="0.63"/><rect x="317.6" y="33.2" width="1.7" height="1.7" opacity="0.66"/><rect x="321.2" y="33.2" width="1.7" height="1.7" opacity="0.60"/><rect x="324.8" y="33.2" width="1.7" height="1.7" opacity="0.62"/><rect x="328.4" y="33.2" width="1.7" height="1.7" opacity="0.84"/><rect x="332.0" y="33.2" width="1.7" height="1.7" opacity="0.65"/><rect x="335.6" y="33.2" width="1.7" height="1.7" opacity="0.88"/><rect x="339.2" y="33.2" width="1.7" height="1.7" opacity="0.61"/><rect x="342.8" y="33.2" width="1.7" height="1.7" opacity="0.76"/><rect x="299.6" y="36.8" width="1.7" height="1.7" opacity="0.68"/><rect x="303.2" y="36.8" width="1.7" height="1.7" opacity="0.81"/><rect x="310.4" y="36.8" width="1.7" height="1.7" opacity="0.62"/><rect x="314.0" y="36.8" width="1.7" height="1.7" opacity="0.58"/><rect x="321.2" y="36.8" width="1.7" height="1.7" opacity="0.84"/><rect x="324.8" y="36.8" width="1.7" height="1.7" opacity="0.82"/><rect x="328.4" y="36.8" width="1.7" height="1.7" opacity="0.61"/><rect x="332.0" y="36.8" width="1.7" height="1.7" opacity="0.84"/><rect x="335.6" y="36.8" width="1.7" height="1.7" opacity="0.72"/><rect x="339.2" y="36.8" width="1.7" height="1.7" opacity="0.59"/><rect x="342.8" y="36.8" width="1.7" height="1.7" opacity="0.57"/><rect x="296.0" y="40.4" width="1.7" height="1.7" opacity="0.59"/><rect x="299.6" y="40.4" width="1.7" height="1.7" opacity="0.72"/><rect x="303.2" y="40.4" width="1.7" height="1.7" opacity="0.51"/><rect x="306.8" y="40.4" width="1.7" height="1.7" opacity="0.73"/><rect x="310.4" y="40.4" width="1.7" height="1.7" opacity="0.61"/><rect x="314.0" y="40.4" width="1.7" height="1.7" opacity="0.77"/><rect x="317.6" y="40.4" width="1.7" height="1.7" opacity="0.53"/><rect x="321.2" y="40.4" width="1.7" height="1.7" opacity="0.64"/><rect x="324.8" y="40.4" width="1.7" height="1.7" opacity="0.72"/><rect x="328.4" y="40.4" width="1.7" height="1.7" opacity="0.56"/><rect x="332.0" y="40.4" width="1.7" height="1.7" opacity="0.64"/><rect x="335.6" y="40.4" width="1.7" height="1.7" opacity="0.61"/><rect x="342.8" y="40.4" width="1.7" height="1.7" opacity="0.70"/><rect x="296.0" y="44.0" width="1.7" height="1.7" opacity="0.63"/><rect x="299.6" y="44.0" width="1.7" height="1.7" opacity="0.82"/><rect x="303.2" y="44.0" width="1.7" height="1.7" opacity="0.56"/><rect x="306.8" y="44.0" width="1.7" height="1.7" opacity="0.56"/><rect x="310.4" y="44.0" width="1.7" height="1.7" opacity="0.79"/><rect x="314.0" y="44.0" width="1.7" height="1.7" opacity="0.76"/><rect x="317.6" y="44.0" width="1.7" height="1.7" opacity="0.78"/><rect x="321.2" y="44.0" width="1.7" height="1.7" opacity="0.55"/><rect x="324.8" y="44.0" width="1.7" height="1.7" opacity="0.67"/><rect x="328.4" y="44.0" width="1.7" height="1.7" opacity="0.79"/><rect x="332.0" y="44.0" width="1.7" height="1.7" opacity="0.70"/><rect x="335.6" y="44.0" width="1.7" height="1.7" opacity="0.66"/><rect x="339.2" y="44.0" width="1.7" height="1.7" opacity="0.59"/><rect x="342.8" y="44.0" width="1.7" height="1.7" opacity="0.80"/><rect x="296.0" y="47.6" width="1.7" height="1.7" opacity="0.64"/><rect x="299.6" y="47.6" width="1.7" height="1.7" opacity="0.79"/><rect x="303.2" y="47.6" width="1.7" height="1.7" opacity="0.52"/><rect x="314.0" y="47.6" width="1.7" height="1.7" opacity="0.50"/><rect x="321.2" y="47.6" width="1.7" height="1.7" opacity="0.77"/><rect x="324.8" y="47.6" width="1.7" height="1.7" opacity="0.74"/><rect x="328.4" y="47.6" width="1.7" height="1.7" opacity="0.73"/><rect x="332.0" y="47.6" width="1.7" height="1.7" opacity="0.61"/><rect x="335.6" y="47.6" width="1.7" height="1.7" opacity="0.74"/><rect x="339.2" y="47.6" width="1.7" height="1.7" opacity="0.55"/><rect x="342.8" y="47.6" width="1.7" height="1.7" opacity="0.65"/><rect x="296.0" y="51.2" width="1.7" height="1.7" opacity="0.51"/><rect x="299.6" y="51.2" width="1.7" height="1.7" opacity="0.69"/><rect x="306.8" y="51.2" width="1.7" height="1.7" opacity="0.64"/><rect x="310.4" y="51.2" width="1.7" height="1.7" opacity="0.48"/><rect x="314.0" y="51.2" width="1.7" height="1.7" opacity="0.50"/><rect x="317.6" y="51.2" width="1.7" height="1.7" opacity="0.64"/><rect x="321.2" y="51.2" width="1.7" height="1.7" opacity="0.56"/><rect x="324.8" y="51.2" width="1.7" height="1.7" opacity="0.65"/><rect x="328.4" y="51.2" width="1.7" height="1.7" opacity="0.67"/><rect x="332.0" y="51.2" width="1.7" height="1.7" opacity="0.60"/><rect x="335.6" y="51.2" width="1.7" height="1.7" opacity="0.66"/><rect x="339.2" y="51.2" width="1.7" height="1.7" opacity="0.54"/><rect x="342.8" y="51.2" width="1.7" height="1.7" opacity="0.71"/><rect x="296.0" y="54.8" width="1.7" height="1.7" opacity="0.51"/><rect x="299.6" y="54.8" width="1.7" height="1.7" opacity="0.49"/><rect x="303.2" y="54.8" width="1.7" height="1.7" opacity="0.58"/><rect x="306.8" y="54.8" width="1.7" height="1.7" opacity="0.59"/><rect x="310.4" y="54.8" width="1.7" height="1.7" opacity="0.47"/><rect x="314.0" y="54.8" width="1.7" height="1.7" opacity="0.48"/><rect x="317.6" y="54.8" width="1.7" height="1.7" opacity="0.69"/><rect x="321.2" y="54.8" width="1.7" height="1.7" opacity="0.47"/><rect x="324.8" y="54.8" width="1.7" height="1.7" opacity="0.57"/><rect x="332.0" y="54.8" width="1.7" height="1.7" opacity="0.71"/><rect x="339.2" y="54.8" width="1.7" height="1.7" opacity="0.70"/><rect x="342.8" y="54.8" width="1.7" height="1.7" opacity="0.75"/><rect x="296.0" y="58.4" width="1.7" height="1.7" opacity="0.72"/><rect x="303.2" y="58.4" width="1.7" height="1.7" opacity="0.67"/><rect x="310.4" y="58.4" width="1.7" height="1.7" opacity="0.54"/><rect x="314.0" y="58.4" width="1.7" height="1.7" opacity="0.49"/><rect x="321.2" y="58.4" width="1.7" height="1.7" opacity="0.68"/><rect x="324.8" y="58.4" width="1.7" height="1.7" opacity="0.59"/><rect x="332.0" y="58.4" width="1.7" height="1.7" opacity="0.52"/><rect x="335.6" y="58.4" width="1.7" height="1.7" opacity="0.54"/><rect x="339.2" y="58.4" width="1.7" height="1.7" opacity="0.50"/><rect x="342.8" y="58.4" width="1.7" height="1.7" opacity="0.72"/><rect x="296.0" y="62.0" width="1.7" height="1.7" opacity="0.68"/><rect x="299.6" y="62.0" width="1.7" height="1.7" opacity="0.65"/><rect x="303.2" y="62.0" width="1.7" height="1.7" opacity="0.58"/><rect x="306.8" y="62.0" width="1.7" height="1.7" opacity="0.53"/><rect x="314.0" y="62.0" width="1.7" height="1.7" opacity="0.59"/><rect x="321.2" y="62.0" width="1.7" height="1.7" opacity="0.71"/><rect x="324.8" y="62.0" width="1.7" height="1.7" opacity="0.54"/><rect x="328.4" y="62.0" width="1.7" height="1.7" opacity="0.50"/><rect x="335.6" y="62.0" width="1.7" height="1.7" opacity="0.53"/><rect x="339.2" y="62.0" width="1.7" height="1.7" opacity="0.56"/><rect x="342.8" y="62.0" width="1.7" height="1.7" opacity="0.64"/><rect x="296.0" y="65.6" width="1.7" height="1.7" opacity="0.64"/><rect x="299.6" y="65.6" width="1.7" height="1.7" opacity="0.59"/><rect x="306.8" y="65.6" width="1.7" height="1.7" opacity="0.60"/><rect x="310.4" y="65.6" width="1.7" height="1.7" opacity="0.42"/><rect x="314.0" y="65.6" width="1.7" height="1.7" opacity="0.46"/><rect x="317.6" y="65.6" width="1.7" height="1.7" opacity="0.54"/><rect x="321.2" y="65.6" width="1.7" height="1.7" opacity="0.66"/><rect x="324.8" y="65.6" width="1.7" height="1.7" opacity="0.48"/><rect x="328.4" y="65.6" width="1.7" height="1.7" opacity="0.42"/><rect x="332.0" y="65.6" width="1.7" height="1.7" opacity="0.51"/><rect x="335.6" y="65.6" width="1.7" height="1.7" opacity="0.52"/><rect x="339.2" y="65.6" width="1.7" height="1.7" opacity="0.58"/><rect x="342.8" y="65.6" width="1.7" height="1.7" opacity="0.47"/><rect x="296.0" y="69.2" width="1.7" height="1.7" opacity="0.53"/><rect x="299.6" y="69.2" width="1.7" height="1.7" opacity="0.66"/><rect x="303.2" y="69.2" width="1.7" height="1.7" opacity="0.44"/><rect x="306.8" y="69.2" width="1.7" height="1.7" opacity="0.58"/><rect x="314.0" y="69.2" width="1.7" height="1.7" opacity="0.51"/><rect x="317.6" y="69.2" width="1.7" height="1.7" opacity="0.41"/><rect x="321.2" y="69.2" width="1.7" height="1.7" opacity="0.55"/><rect x="324.8" y="69.2" width="1.7" height="1.7" opacity="0.58"/><rect x="328.4" y="69.2" width="1.7" height="1.7" opacity="0.66"/><rect x="332.0" y="69.2" width="1.7" height="1.7" opacity="0.47"/><rect x="339.2" y="69.2" width="1.7" height="1.7" opacity="0.55"/><rect x="342.8" y="69.2" width="1.7" height="1.7" opacity="0.47"/><rect x="296.0" y="72.8" width="1.7" height="1.7" opacity="0.59"/><rect x="299.6" y="72.8" width="1.7" height="1.7" opacity="0.53"/><rect x="306.8" y="72.8" width="1.7" height="1.7" opacity="0.44"/><rect x="310.4" y="72.8" width="1.7" height="1.7" opacity="0.52"/><rect x="314.0" y="72.8" width="1.7" height="1.7" opacity="0.60"/><rect x="317.6" y="72.8" width="1.7" height="1.7" opacity="0.47"/><rect x="321.2" y="72.8" width="1.7" height="1.7" opacity="0.40"/><rect x="332.0" y="72.8" width="1.7" height="1.7" opacity="0.39"/><rect x="339.2" y="72.8" width="1.7" height="1.7" opacity="0.51"/><rect x="342.8" y="72.8" width="1.7" height="1.7" opacity="0.51"/><rect x="296.0" y="76.4" width="1.7" height="1.7" opacity="0.40"/><rect x="299.6" y="76.4" width="1.7" height="1.7" opacity="0.39"/><rect x="303.2" y="76.4" width="1.7" height="1.7" opacity="0.57"/><rect x="306.8" y="76.4" width="1.7" height="1.7" opacity="0.59"/><rect x="310.4" y="76.4" width="1.7" height="1.7" opacity="0.45"/><rect x="314.0" y="76.4" width="1.7" height="1.7" opacity="0.49"/><rect x="321.2" y="76.4" width="1.7" height="1.7" opacity="0.45"/><rect x="324.8" y="76.4" width="1.7" height="1.7" opacity="0.62"/><rect x="328.4" y="76.4" width="1.7" height="1.7" opacity="0.60"/><rect x="332.0" y="76.4" width="1.7" height="1.7" opacity="0.44"/><rect x="335.6" y="76.4" width="1.7" height="1.7" opacity="0.57"/><rect x="342.8" y="76.4" width="1.7" height="1.7" opacity="0.46"/><rect x="299.6" y="80.0" width="1.7" height="1.7" opacity="0.42"/><rect x="306.8" y="80.0" width="1.7" height="1.7" opacity="0.53"/><rect x="310.4" y="80.0" width="1.7" height="1.7" opacity="0.60"/><rect x="314.0" y="80.0" width="1.7" height="1.7" opacity="0.57"/><rect x="317.6" y="80.0" width="1.7" height="1.7" opacity="0.57"/><rect x="321.2" y="80.0" width="1.7" height="1.7" opacity="0.54"/><rect x="324.8" y="80.0" width="1.7" height="1.7" opacity="0.44"/><rect x="328.4" y="80.0" width="1.7" height="1.7" opacity="0.52"/><rect x="332.0" y="80.0" width="1.7" height="1.7" opacity="0.59"/><rect x="335.6" y="80.0" width="1.7" height="1.7" opacity="0.37"/><rect x="339.2" y="80.0" width="1.7" height="1.7" opacity="0.59"/><rect x="342.8" y="80.0" width="1.7" height="1.7" opacity="0.40"/><rect x="296.0" y="83.6" width="1.7" height="1.7" opacity="0.36"/><rect x="299.6" y="83.6" width="1.7" height="1.7" opacity="0.50"/><rect x="303.2" y="83.6" width="1.7" height="1.7" opacity="0.53"/><rect x="306.8" y="83.6" width="1.7" height="1.7" opacity="0.49"/><rect x="310.4" y="83.6" width="1.7" height="1.7" opacity="0.55"/><rect x="321.2" y="83.6" width="1.7" height="1.7" opacity="0.56"/><rect x="332.0" y="83.6" width="1.7" height="1.7" opacity="0.40"/><rect x="335.6" y="83.6" width="1.7" height="1.7" opacity="0.36"/><rect x="296.0" y="87.2" width="1.7" height="1.7" opacity="0.53"/><rect x="299.6" y="87.2" width="1.7" height="1.7" opacity="0.41"/><rect x="303.2" y="87.2" width="1.7" height="1.7" opacity="0.36"/><rect x="310.4" y="87.2" width="1.7" height="1.7" opacity="0.41"/><rect x="314.0" y="87.2" width="1.7" height="1.7" opacity="0.35"/><rect x="317.6" y="87.2" width="1.7" height="1.7" opacity="0.40"/><rect x="321.2" y="87.2" width="1.7" height="1.7" opacity="0.42"/><rect x="324.8" y="87.2" width="1.7" height="1.7" opacity="0.56"/><rect x="328.4" y="87.2" width="1.7" height="1.7" opacity="0.53"/><rect x="332.0" y="87.2" width="1.7" height="1.7" opacity="0.35"/><rect x="335.6" y="87.2" width="1.7" height="1.7" opacity="0.44"/><rect x="342.8" y="87.2" width="1.7" height="1.7" opacity="0.50"/><rect x="296.0" y="90.8" width="1.7" height="1.7" opacity="0.37"/><rect x="303.2" y="90.8" width="1.7" height="1.7" opacity="0.51"/><rect x="306.8" y="90.8" width="1.7" height="1.7" opacity="0.33"/><rect x="310.4" y="90.8" width="1.7" height="1.7" opacity="0.49"/><rect x="317.6" y="90.8" width="1.7" height="1.7" opacity="0.43"/><rect x="321.2" y="90.8" width="1.7" height="1.7" opacity="0.50"/><rect x="324.8" y="90.8" width="1.7" height="1.7" opacity="0.44"/><rect x="328.4" y="90.8" width="1.7" height="1.7" opacity="0.51"/><rect x="332.0" y="90.8" width="1.7" height="1.7" opacity="0.53"/><rect x="335.6" y="90.8" width="1.7" height="1.7" opacity="0.37"/><rect x="339.2" y="90.8" width="1.7" height="1.7" opacity="0.44"/><rect x="342.8" y="90.8" width="1.7" height="1.7" opacity="0.47"/><rect x="296.0" y="94.4" width="1.7" height="1.7" opacity="0.48"/><rect x="306.8" y="94.4" width="1.7" height="1.7" opacity="0.39"/><rect x="310.4" y="94.4" width="1.7" height="1.7" opacity="0.40"/><rect x="317.6" y="94.4" width="1.7" height="1.7" opacity="0.50"/><rect x="321.2" y="94.4" width="1.7" height="1.7" opacity="0.36"/><rect x="324.8" y="94.4" width="1.7" height="1.7" opacity="0.50"/><rect x="328.4" y="94.4" width="1.7" height="1.7" opacity="0.39"/><rect x="335.6" y="94.4" width="1.7" height="1.7" opacity="0.41"/><rect x="339.2" y="94.4" width="1.7" height="1.7" opacity="0.47"/><rect x="296.0" y="98.0" width="1.7" height="1.7" opacity="0.37"/><rect x="299.6" y="98.0" width="1.7" height="1.7" opacity="0.33"/><rect x="306.8" y="98.0" width="1.7" height="1.7" opacity="0.45"/><rect x="310.4" y="98.0" width="1.7" height="1.7" opacity="0.39"/><rect x="317.6" y="98.0" width="1.7" height="1.7" opacity="0.33"/><rect x="321.2" y="98.0" width="1.7" height="1.7" opacity="0.48"/><rect x="324.8" y="98.0" width="1.7" height="1.7" opacity="0.34"/><rect x="328.4" y="98.0" width="1.7" height="1.7" opacity="0.44"/><rect x="335.6" y="98.0" width="1.7" height="1.7" opacity="0.33"/><rect x="339.2" y="98.0" width="1.7" height="1.7" opacity="0.37"/><rect x="342.8" y="98.0" width="1.7" height="1.7" opacity="0.33"/><rect x="296.0" y="101.6" width="1.7" height="1.7" opacity="0.33"/><rect x="306.8" y="101.6" width="1.7" height="1.7" opacity="0.48"/><rect x="310.4" y="101.6" width="1.7" height="1.7" opacity="0.36"/><rect x="324.8" y="101.6" width="1.7" height="1.7" opacity="0.33"/><rect x="328.4" y="101.6" width="1.7" height="1.7" opacity="0.31"/><rect x="332.0" y="101.6" width="1.7" height="1.7" opacity="0.36"/><rect x="335.6" y="101.6" width="1.7" height="1.7" opacity="0.37"/><rect x="296.0" y="105.2" width="1.7" height="1.7" opacity="0.39"/><rect x="299.6" y="105.2" width="1.7" height="1.7" opacity="0.30"/><rect x="303.2" y="105.2" width="1.7" height="1.7" opacity="0.35"/><rect x="314.0" y="105.2" width="1.7" height="1.7" opacity="0.38"/><rect x="321.2" y="105.2" width="1.7" height="1.7" opacity="0.32"/><rect x="299.6" y="108.8" width="1.7" height="1.7" opacity="0.32"/><rect x="303.2" y="108.8" width="1.7" height="1.7" opacity="0.28"/><rect x="306.8" y="108.8" width="1.7" height="1.7" opacity="0.40"/><rect x="314.0" y="108.8" width="1.7" height="1.7" opacity="0.31"/><rect x="317.6" y="108.8" width="1.7" height="1.7" opacity="0.34"/><rect x="321.2" y="108.8" width="1.7" height="1.7" opacity="0.34"/><rect x="332.0" y="108.8" width="1.7" height="1.7" opacity="0.38"/><rect x="339.2" y="108.8" width="1.7" height="1.7" opacity="0.35"/><rect x="296.0" y="112.4" width="1.7" height="1.7" opacity="0.34"/><rect x="299.6" y="112.4" width="1.7" height="1.7" opacity="0.38"/><rect x="306.8" y="112.4" width="1.7" height="1.7" opacity="0.27"/><rect x="310.4" y="112.4" width="1.7" height="1.7" opacity="0.34"/><rect x="317.6" y="112.4" width="1.7" height="1.7" opacity="0.36"/><rect x="324.8" y="112.4" width="1.7" height="1.7" opacity="0.32"/><rect x="332.0" y="112.4" width="1.7" height="1.7" opacity="0.37"/><rect x="335.6" y="112.4" width="1.7" height="1.7" opacity="0.38"/><rect x="339.2" y="112.4" width="1.7" height="1.7" opacity="0.42"/><rect x="342.8" y="112.4" width="1.7" height="1.7" opacity="0.26"/><rect x="296.0" y="116.0" width="1.7" height="1.7" opacity="0.30"/><rect x="299.6" y="116.0" width="1.7" height="1.7" opacity="0.31"/><rect x="303.2" y="116.0" width="1.7" height="1.7" opacity="0.35"/><rect x="306.8" y="116.0" width="1.7" height="1.7" opacity="0.28"/><rect x="310.4" y="116.0" width="1.7" height="1.7" opacity="0.36"/><rect x="317.6" y="116.0" width="1.7" height="1.7" opacity="0.27"/><rect x="324.8" y="116.0" width="1.7" height="1.7" opacity="0.27"/><rect x="328.4" y="116.0" width="1.7" height="1.7" opacity="0.36"/><rect x="339.2" y="116.0" width="1.7" height="1.7" opacity="0.33"/><rect x="342.8" y="116.0" width="1.7" height="1.7" opacity="0.39"/><rect x="296.0" y="119.6" width="1.7" height="1.7" opacity="0.32"/><rect x="306.8" y="119.6" width="1.7" height="1.7" opacity="0.27"/><rect x="310.4" y="119.6" width="1.7" height="1.7" opacity="0.25"/><rect x="317.6" y="119.6" width="1.7" height="1.7" opacity="0.35"/><rect x="321.2" y="119.6" width="1.7" height="1.7" opacity="0.28"/><rect x="324.8" y="119.6" width="1.7" height="1.7" opacity="0.29"/><rect x="328.4" y="119.6" width="1.7" height="1.7" opacity="0.23"/><rect x="335.6" y="119.6" width="1.7" height="1.7" opacity="0.26"/><rect x="339.2" y="119.6" width="1.7" height="1.7" opacity="0.30"/><rect x="342.8" y="119.6" width="1.7" height="1.7" opacity="0.32"/><rect x="299.6" y="123.2" width="1.7" height="1.7" opacity="0.35"/><rect x="306.8" y="123.2" width="1.7" height="1.7" opacity="0.33"/><rect x="317.6" y="123.2" width="1.7" height="1.7" opacity="0.33"/><rect x="324.8" y="123.2" width="1.7" height="1.7" opacity="0.22"/><rect x="335.6" y="123.2" width="1.7" height="1.7" opacity="0.23"/><rect x="339.2" y="123.2" width="1.7" height="1.7" opacity="0.25"/><rect x="296.0" y="126.8" width="1.7" height="1.7" opacity="0.22"/><rect x="306.8" y="126.8" width="1.7" height="1.7" opacity="0.32"/><rect x="332.0" y="126.8" width="1.7" height="1.7" opacity="0.29"/><rect x="335.6" y="126.8" width="1.7" height="1.7" opacity="0.30"/><rect x="339.2" y="126.8" width="1.7" height="1.7" opacity="0.32"/><rect x="342.8" y="126.8" width="1.7" height="1.7" opacity="0.24"/><rect x="296.0" y="130.4" width="1.7" height="1.7" opacity="0.21"/><rect x="299.6" y="130.4" width="1.7" height="1.7" opacity="0.20"/><rect x="303.2" y="130.4" width="1.7" height="1.7" opacity="0.21"/><rect x="306.8" y="130.4" width="1.7" height="1.7" opacity="0.25"/><rect x="310.4" y="130.4" width="1.7" height="1.7" opacity="0.30"/><rect x="314.0" y="130.4" width="1.7" height="1.7" opacity="0.29"/><rect x="317.6" y="130.4" width="1.7" height="1.7" opacity="0.26"/><rect x="328.4" y="130.4" width="1.7" height="1.7" opacity="0.24"/><rect x="335.6" y="130.4" width="1.7" height="1.7" opacity="0.27"/><rect x="342.8" y="130.4" width="1.7" height="1.7" opacity="0.27"/><rect x="303.2" y="134.0" width="1.7" height="1.7" opacity="0.29"/><rect x="306.8" y="134.0" width="1.7" height="1.7" opacity="0.23"/><rect x="314.0" y="134.0" width="1.7" height="1.7" opacity="0.26"/><rect x="321.2" y="134.0" width="1.7" height="1.7" opacity="0.28"/><rect x="324.8" y="134.0" width="1.7" height="1.7" opacity="0.23"/><rect x="328.4" y="134.0" width="1.7" height="1.7" opacity="0.27"/><rect x="332.0" y="134.0" width="1.7" height="1.7" opacity="0.23"/><rect x="335.6" y="134.0" width="1.7" height="1.7" opacity="0.24"/><rect x="342.8" y="134.0" width="1.7" height="1.7" opacity="0.27"/><rect x="296.0" y="137.6" width="1.7" height="1.7" opacity="0.22"/><rect x="299.6" y="137.6" width="1.7" height="1.7" opacity="0.22"/><rect x="314.0" y="137.6" width="1.7" height="1.7" opacity="0.20"/><rect x="317.6" y="137.6" width="1.7" height="1.7" opacity="0.23"/><rect x="328.4" y="137.6" width="1.7" height="1.7" opacity="0.24"/><rect x="339.2" y="137.6" width="1.7" height="1.7" opacity="0.20"/><rect x="342.8" y="137.6" width="1.7" height="1.7" opacity="0.18"/><rect x="335.6" y="141.2" width="1.7" height="1.7" opacity="0.22"/><rect x="339.2" y="141.2" width="1.7" height="1.7" opacity="0.23"/><rect x="342.8" y="141.2" width="1.7" height="1.7" opacity="0.17"/><rect x="296.0" y="144.8" width="1.7" height="1.7" opacity="0.21"/><rect x="306.8" y="144.8" width="1.7" height="1.7" opacity="0.21"/><rect x="317.6" y="144.8" width="1.7" height="1.7" opacity="0.17"/><rect x="321.2" y="144.8" width="1.7" height="1.7" opacity="0.17"/><rect x="324.8" y="144.8" width="1.7" height="1.7" opacity="0.20"/><rect x="332.0" y="144.8" width="1.7" height="1.7" opacity="0.19"/><rect x="335.6" y="144.8" width="1.7" height="1.7" opacity="0.15"/><rect x="299.6" y="148.4" width="1.7" height="1.7" opacity="0.13"/><rect x="303.2" y="148.4" width="1.7" height="1.7" opacity="0.17"/><rect x="314.0" y="148.4" width="1.7" height="1.7" opacity="0.16"/><rect x="317.6" y="148.4" width="1.7" height="1.7" opacity="0.18"/><rect x="321.2" y="148.4" width="1.7" height="1.7" opacity="0.14"/><rect x="324.8" y="148.4" width="1.7" height="1.7" opacity="0.13"/><rect x="332.0" y="148.4" width="1.7" height="1.7" opacity="0.21"/><rect x="335.6" y="148.4" width="1.7" height="1.7" opacity="0.20"/><rect x="339.2" y="148.4" width="1.7" height="1.7" opacity="0.13"/><rect x="296.0" y="152.0" width="1.7" height="1.7" opacity="0.17"/><rect x="299.6" y="152.0" width="1.7" height="1.7" opacity="0.12"/><rect x="317.6" y="152.0" width="1.7" height="1.7" opacity="0.16"/><rect x="324.8" y="152.0" width="1.7" height="1.7" opacity="0.18"/><rect x="328.4" y="152.0" width="1.7" height="1.7" opacity="0.18"/><rect x="335.6" y="152.0" width="1.7" height="1.7" opacity="0.11"/><rect x="296.0" y="155.6" width="1.7" height="1.7" opacity="0.12"/><rect x="303.2" y="155.6" width="1.7" height="1.7" opacity="0.16"/><rect x="310.4" y="155.6" width="1.7" height="1.7" opacity="0.12"/><rect x="317.6" y="155.6" width="1.7" height="1.7" opacity="0.14"/><rect x="321.2" y="155.6" width="1.7" height="1.7" opacity="0.15"/><rect x="324.8" y="155.6" width="1.7" height="1.7" opacity="0.14"/><rect x="332.0" y="155.6" width="1.7" height="1.7" opacity="0.13"/><rect x="299.6" y="159.2" width="1.7" height="1.7" opacity="0.09"/><rect x="314.0" y="159.2" width="1.7" height="1.7" opacity="0.12"/><rect x="328.4" y="159.2" width="1.7" height="1.7" opacity="0.11"/><rect x="335.6" y="159.2" width="1.7" height="1.7" opacity="0.13"/><rect x="349.0" y="53.0" width="1.7" height="1.7" opacity="0.39"/><rect x="352.6" y="53.0" width="1.7" height="1.7" opacity="0.39"/><rect x="356.2" y="53.0" width="1.7" height="1.7" opacity="0.46"/><rect x="359.8" y="53.0" width="1.7" height="1.7" opacity="0.53"/><rect x="363.4" y="53.0" width="1.7" height="1.7" opacity="0.52"/><rect x="367.0" y="53.0" width="1.7" height="1.7" opacity="0.52"/><rect x="349.0" y="56.6" width="1.7" height="1.7" opacity="0.38"/><rect x="352.6" y="56.6" width="1.7" height="1.7" opacity="0.49"/><rect x="356.2" y="56.6" width="1.7" height="1.7" opacity="0.51"/><rect x="359.8" y="56.6" width="1.7" height="1.7" opacity="0.34"/><rect x="363.4" y="56.6" width="1.7" height="1.7" opacity="0.49"/><rect x="367.0" y="56.6" width="1.7" height="1.7" opacity="0.48"/><rect x="352.6" y="60.2" width="1.7" height="1.7" opacity="0.43"/><rect x="356.2" y="60.2" width="1.7" height="1.7" opacity="0.40"/><rect x="359.8" y="60.2" width="1.7" height="1.7" opacity="0.36"/><rect x="363.4" y="60.2" width="1.7" height="1.7" opacity="0.47"/><rect x="367.0" y="60.2" width="1.7" height="1.7" opacity="0.33"/><rect x="349.0" y="63.8" width="1.7" height="1.7" opacity="0.45"/><rect x="352.6" y="63.8" width="1.7" height="1.7" opacity="0.41"/><rect x="363.4" y="63.8" width="1.7" height="1.7" opacity="0.39"/><rect x="367.0" y="63.8" width="1.7" height="1.7" opacity="0.34"/><rect x="349.0" y="67.4" width="1.7" height="1.7" opacity="0.32"/><rect x="352.6" y="67.4" width="1.7" height="1.7" opacity="0.36"/><rect x="356.2" y="67.4" width="1.7" height="1.7" opacity="0.36"/><rect x="359.8" y="67.4" width="1.7" height="1.7" opacity="0.31"/><rect x="363.4" y="67.4" width="1.7" height="1.7" opacity="0.48"/><rect x="367.0" y="67.4" width="1.7" height="1.7" opacity="0.31"/><rect x="349.0" y="71.0" width="1.7" height="1.7" opacity="0.42"/><rect x="352.6" y="71.0" width="1.7" height="1.7" opacity="0.38"/><rect x="356.2" y="71.0" width="1.7" height="1.7" opacity="0.37"/><rect x="359.8" y="71.0" width="1.7" height="1.7" opacity="0.28"/><rect x="349.0" y="74.6" width="1.7" height="1.7" opacity="0.36"/><rect x="352.6" y="74.6" width="1.7" height="1.7" opacity="0.40"/><rect x="356.2" y="74.6" width="1.7" height="1.7" opacity="0.43"/><rect x="359.8" y="74.6" width="1.7" height="1.7" opacity="0.41"/><rect x="367.0" y="74.6" width="1.7" height="1.7" opacity="0.27"/><rect x="349.0" y="78.2" width="1.7" height="1.7" opacity="0.28"/><rect x="352.6" y="78.2" width="1.7" height="1.7" opacity="0.26"/><rect x="356.2" y="78.2" width="1.7" height="1.7" opacity="0.40"/><rect x="359.8" y="78.2" width="1.7" height="1.7" opacity="0.41"/><rect x="367.0" y="78.2" width="1.7" height="1.7" opacity="0.35"/><rect x="349.0" y="81.8" width="1.7" height="1.7" opacity="0.26"/><rect x="356.2" y="81.8" width="1.7" height="1.7" opacity="0.33"/><rect x="359.8" y="81.8" width="1.7" height="1.7" opacity="0.40"/><rect x="363.4" y="81.8" width="1.7" height="1.7" opacity="0.30"/><rect x="367.0" y="81.8" width="1.7" height="1.7" opacity="0.27"/><rect x="356.2" y="85.4" width="1.7" height="1.7" opacity="0.24"/><rect x="359.8" y="85.4" width="1.7" height="1.7" opacity="0.28"/><rect x="352.6" y="89.0" width="1.7" height="1.7" opacity="0.33"/><rect x="356.2" y="89.0" width="1.7" height="1.7" opacity="0.31"/><rect x="363.4" y="89.0" width="1.7" height="1.7" opacity="0.24"/><rect x="352.6" y="92.6" width="1.7" height="1.7" opacity="0.25"/><rect x="356.2" y="92.6" width="1.7" height="1.7" opacity="0.31"/><rect x="359.8" y="92.6" width="1.7" height="1.7" opacity="0.25"/><rect x="363.4" y="92.6" width="1.7" height="1.7" opacity="0.22"/><rect x="367.0" y="92.6" width="1.7" height="1.7" opacity="0.23"/><rect x="349.0" y="96.2" width="1.7" height="1.7" opacity="0.22"/><rect x="352.6" y="96.2" width="1.7" height="1.7" opacity="0.20"/><rect x="359.8" y="96.2" width="1.7" height="1.7" opacity="0.20"/><rect x="367.0" y="96.2" width="1.7" height="1.7" opacity="0.32"/><rect x="356.2" y="99.8" width="1.7" height="1.7" opacity="0.24"/><rect x="359.8" y="99.8" width="1.7" height="1.7" opacity="0.30"/><rect x="367.0" y="99.8" width="1.7" height="1.7" opacity="0.24"/><rect x="349.0" y="103.4" width="1.7" height="1.7" opacity="0.27"/><rect x="352.6" y="103.4" width="1.7" height="1.7" opacity="0.25"/><rect x="356.2" y="103.4" width="1.7" height="1.7" opacity="0.20"/><rect x="359.8" y="103.4" width="1.7" height="1.7" opacity="0.26"/><rect x="363.4" y="103.4" width="1.7" height="1.7" opacity="0.19"/><rect x="349.0" y="107.0" width="1.7" height="1.7" opacity="0.21"/><rect x="352.6" y="107.0" width="1.7" height="1.7" opacity="0.19"/><rect x="359.8" y="107.0" width="1.7" height="1.7" opacity="0.18"/><rect x="363.4" y="107.0" width="1.7" height="1.7" opacity="0.20"/><rect x="349.0" y="110.6" width="1.7" height="1.7" opacity="0.25"/><rect x="352.6" y="110.6" width="1.7" height="1.7" opacity="0.24"/><rect x="359.8" y="110.6" width="1.7" height="1.7" opacity="0.20"/><rect x="363.4" y="110.6" width="1.7" height="1.7" opacity="0.18"/><rect x="367.0" y="110.6" width="1.7" height="1.7" opacity="0.19"/><rect x="359.8" y="114.2" width="1.7" height="1.7" opacity="0.17"/><rect x="367.0" y="114.2" width="1.7" height="1.7" opacity="0.21"/><rect x="349.0" y="117.8" width="1.7" height="1.7" opacity="0.21"/><rect x="352.6" y="117.8" width="1.7" height="1.7" opacity="0.20"/><rect x="356.2" y="117.8" width="1.7" height="1.7" opacity="0.14"/><rect x="359.8" y="117.8" width="1.7" height="1.7" opacity="0.20"/><rect x="363.4" y="117.8" width="1.7" height="1.7" opacity="0.15"/><rect x="367.0" y="117.8" width="1.7" height="1.7" opacity="0.21"/><rect x="349.0" y="121.4" width="1.7" height="1.7" opacity="0.16"/><rect x="352.6" y="121.4" width="1.7" height="1.7" opacity="0.13"/><rect x="363.4" y="121.4" width="1.7" height="1.7" opacity="0.12"/><rect x="367.0" y="121.4" width="1.7" height="1.7" opacity="0.17"/><rect x="349.0" y="125.0" width="1.7" height="1.7" opacity="0.13"/><rect x="352.6" y="125.0" width="1.7" height="1.7" opacity="0.15"/><rect x="367.0" y="125.0" width="1.7" height="1.7" opacity="0.11"/><rect x="352.6" y="128.6" width="1.7" height="1.7" opacity="0.14"/><rect x="356.2" y="128.6" width="1.7" height="1.7" opacity="0.15"/><rect x="359.8" y="128.6" width="1.7" height="1.7" opacity="0.15"/><rect x="367.0" y="128.6" width="1.7" height="1.7" opacity="0.10"/><rect x="352.6" y="132.2" width="1.7" height="1.7" opacity="0.13"/><rect x="356.2" y="132.2" width="1.7" height="1.7" opacity="0.09"/><rect x="363.4" y="132.2" width="1.7" height="1.7" opacity="0.09"/><rect x="367.0" y="132.2" width="1.7" height="1.7" opacity="0.12"/><rect x="349.0" y="135.8" width="1.7" height="1.7" opacity="0.10"/><rect x="352.6" y="135.8" width="1.7" height="1.7" opacity="0.10"/><rect x="356.2" y="135.8" width="1.7" height="1.7" opacity="0.11"/><rect x="367.0" y="135.8" width="1.7" height="1.7" opacity="0.11"/><rect x="349.0" y="139.4" width="1.7" height="1.7" opacity="0.09"/><rect x="352.6" y="139.4" width="1.7" height="1.7" opacity="0.10"/><rect x="352.6" y="143.0" width="1.7" height="1.7" opacity="0.08"/><rect x="356.2" y="143.0" width="1.7" height="1.7" opacity="0.06"/><rect x="359.8" y="143.0" width="1.7" height="1.7" opacity="0.06"/><rect x="367.0" y="143.0" width="1.7" height="1.7" opacity="0.05"/></g>
<rect x="0" y="212" width="371" height="12" fill="#0d1a33" opacity="0.6"/>
</svg></div>
<div class="t" style="left:3347.05px;top:502.10px;font-size:29.17px;transform:scaleX(1.1502);transform-origin:0 0;color:#ffffff;-webkit-text-stroke:0.5px #ffffff">covercy</div>
<div class="a" style="left:3350.8px;top:620px;width:6.6px;height:6.6px;border-radius:50%;background:#f0f2f7"></div>
<div class="a" style="left:3359.8px;top:620px;width:6.6px;height:6.6px;border-radius:50%;background:#f0f2f7"></div>
<div class="a" style="left:3368.8px;top:620px;width:6.6px;height:6.6px;border-radius:50%;background:#f0f2f7"></div>
<div class="a" style="left:3377.8px;top:620px;width:6.6px;height:6.6px;border-radius:50%;background:#f0f2f7"></div>
<div class="a" style="left:3395.4px;top:620px;width:6.6px;height:6.6px;border-radius:50%;background:#f0f2f7"></div>
<div class="a" style="left:3404.4px;top:620px;width:6.6px;height:6.6px;border-radius:50%;background:#f0f2f7"></div>
<div class="a" style="left:3413.4px;top:620px;width:6.6px;height:6.6px;border-radius:50%;background:#f0f2f7"></div>
<div class="a" style="left:3422.4px;top:620px;width:6.6px;height:6.6px;border-radius:50%;background:#f0f2f7"></div>
<div class="a" style="left:3439.6px;top:620px;width:6.6px;height:6.6px;border-radius:50%;background:#f0f2f7"></div>
<div class="a" style="left:3448.6px;top:620px;width:6.6px;height:6.6px;border-radius:50%;background:#f0f2f7"></div>
<div class="a" style="left:3457.6px;top:620px;width:6.6px;height:6.6px;border-radius:50%;background:#f0f2f7"></div>
<div class="a" style="left:3466.6px;top:620px;width:6.6px;height:6.6px;border-radius:50%;background:#f0f2f7"></div>
<div class="t" style="left:3483.84px;top:614.55px;font-size:19.20px;letter-spacing:0.103px;color:#e6e9f0">2561</div>
<div class="t" style="left:3349.86px;top:659.48px;font-size:9.59px;letter-spacing:-0.133px;transform:scaleX(0.9795);transform-origin:0 0;font-weight:700;color:#c9cfdb">JOHN SMITH</div>
<div class="t" style="left:3618.12px;top:666.96px;font-size:29.22px;letter-spacing:-0.858px;transform:scaleX(0.9595);transform-origin:0 0;font-weight:700;font-style:italic;color:#ffffff">VISA</div>
<div class="a" style="left:3214px;top:793.4px;width:128px;height:35px;border-radius:6px;background:#c5ead6"></div>
<div class="t" style="left:3226.22px;top:799.38px;font-size:22.82px;letter-spacing:-0.545px;transform:scaleX(0.9474);transform-origin:0 0;color:#222">Capital Call</div>
<div class="t" style="left:3507.35px;top:795.70px;font-size:28.94px;letter-spacing:0.356px;color:#1b1b1b;-webkit-text-stroke:1.6px #1b1b1b">+ $250,600.00</div>
<div class="a" style="left:2900px;top:851.0px;width:798px;height:1.5px;background:#e6e7f2"></div>
<div class="a" style="left:3214px;top:875.7px;width:128px;height:35px;border-radius:6px;background:#c5ead6"></div>
<div class="t" style="left:3226.22px;top:881.68px;font-size:22.82px;letter-spacing:-0.545px;transform:scaleX(0.9474);transform-origin:0 0;color:#222">Capital Call</div>
<div class="t" style="left:3507.35px;top:878.00px;font-size:28.94px;letter-spacing:0.356px;color:#1b1b1b;-webkit-text-stroke:1.6px #1b1b1b">+ $300,000.00</div>
<div class="a" style="left:2900px;top:933.3px;width:798px;height:1.5px;background:#e6e7f2"></div>
<div class="a" style="left:3214px;top:958.0px;width:128px;height:35px;border-radius:6px;background:#e4e4f2"></div>
<div class="t" style="left:3224.23px;top:963.98px;font-size:22.82px;letter-spacing:-0.314px;transform:scaleX(0.9689);transform-origin:0 0;color:#222">Distribution</div>
<div class="t" style="left:3535.50px;top:960.30px;font-size:28.94px;letter-spacing:0.752px;color:#1b1b1b;-webkit-text-stroke:1.6px #1b1b1b">-$24,900.00</div>
<div class="a" style="left:2900px;top:1015.6px;width:798px;height:1.5px;background:#e6e7f2"></div>
<div class="a" style="left:3214px;top:1040.3px;width:128px;height:35px;border-radius:6px;background:#e4e4f2"></div>
<div class="t" style="left:3224.23px;top:1046.28px;font-size:22.82px;letter-spacing:-0.314px;transform:scaleX(0.9689);transform-origin:0 0;color:#222">Distribution</div>
<div class="t" style="left:3535.50px;top:1042.60px;font-size:28.94px;letter-spacing:0.752px;color:#1b1b1b;-webkit-text-stroke:1.6px #1b1b1b">-$50,300.00</div>
<div class="a" style="left:906px;top:0;width:2052px;height:1100px;border-radius:30px 30px 0 0;background:#f6f7f9;overflow:hidden;box-shadow:0 45px 70px rgba(30,50,80,0.3)"><div class="a" style="left:0;top:0;width:2052px;height:68px;background:#35577e"></div><div class="a" style="left:0;top:67px;width:2052px;height:1px;background:#2a486c"></div><div class="a" style="left:0;top:68px;width:2052px;height:1.5px;background:#dcdfe7"></div></div>
<div class="t" style="left:965.33px;top:133.62px;font-size:65.41px;letter-spacing:-1.960px;transform:scaleX(0.9457);transform-origin:0 0;color:#0b0b0b;-webkit-text-stroke:3.0px #0b0b0b">GP Investment Management</div>
<div class="a" style="left:977.5px;top:277px;width:1905.5px;height:900px;border-radius:6px;background:#fff"></div>
<div class="a" style="left:1001px;top:299px;width:434px;height:56px;border-radius:7px;border:2px solid #dadde2;background:#fff"></div>
<div class="t" style="left:1078.64px;top:315.89px;font-size:22.09px;letter-spacing:-0.425px;transform:scaleX(0.9630);transform-origin:0 0;color:#55595f">Search deals by name</div>
<svg class="a" style="left:1026px;top:311px" width="34" height="32" viewBox="0 0 34 32"><circle cx="12.5" cy="12" r="8.5" fill="none" stroke="#3d4247" stroke-width="3.2"/><path d="M18.5 18 L28 27.5" stroke="#3d4247" stroke-width="3.6" stroke-linecap="round"/></svg>
<div class="a" style="left:2471px;top:300px;width:319px;height:53px;border-radius:7px;border:2px solid #dcdde2"></div>
<div class="t" style="left:2495.00px;top:315.89px;font-size:22.09px;letter-spacing:-0.452px;transform:scaleX(0.9581);transform-origin:0 0;color:#1e1e1e">All Deals</div>
<svg class="a" style="left:2758px;top:323px" width="16" height="10"><path d="M2 1.5 L13 1.5 L7.5 7.5 Z" fill="#1a1a1a"/></svg>
<div class="a" style="left:2806px;top:300px;width:52px;height:53px;border-radius:7px;border:2px solid #dcdde2"></div>
<div class="a" style="left:2829.1px;top:315.2px;width:6px;height:6px;border-radius:50%;background:#3c4043"></div>
<div class="a" style="left:2829.1px;top:324.1px;width:6px;height:6px;border-radius:50%;background:#3c4043"></div>
<div class="a" style="left:2829.1px;top:333.2px;width:6px;height:6px;border-radius:50%;background:#3c4043"></div>
<div class="a" style="left:977.5px;top:377.5px;width:1905.5px;height:59.5px;background:#f1f1fc"></div>
<div class="t" style="left:997.73px;top:398.20px;font-size:18.90px;letter-spacing:-0.109px;transform:scaleX(0.9883);transform-origin:0 0;color:#222;-webkit-text-stroke:0.45px #222">Details</div>
<div class="t" style="left:1596.79px;top:398.20px;font-size:18.90px;letter-spacing:-0.102px;transform:scaleX(0.9889);transform-origin:0 0;color:#222;-webkit-text-stroke:0.45px #222">Contributions</div>
<svg class="a" style="left:1719.8px;top:402.5px" width="13" height="9"><path d="M0 8.5 L12.5 8.5 L6.25 0.5 Z" fill="#3a1de0"/></svg>
<div class="t" style="left:1795.72px;top:398.20px;font-size:18.90px;letter-spacing:-0.021px;transform:scaleX(0.9975);transform-origin:0 0;color:#222;-webkit-text-stroke:0.45px #222">Distributions</div>
<svg class="a" style="left:1912.5px;top:402.5px" width="14" height="9"><path d="M0 0.5 L13 0.5 L6.5 8.5 Z" fill="#a8a9b0"/></svg>
<div class="t" style="left:1985.94px;top:398.20px;font-size:18.90px;letter-spacing:-1.361px;transform:scaleX(0.9236);transform-origin:0 0;color:#222;-webkit-text-stroke:0.45px #222">CoC%</div>
<svg class="a" style="left:2046.8px;top:402.5px" width="14" height="9"><path d="M0 0.5 L13 0.5 L6.5 8.5 Z" fill="#a8a9b0"/></svg>
<div class="t" style="left:2093.22px;top:398.20px;font-size:18.90px;letter-spacing:-0.053px;transform:scaleX(0.9936);transform-origin:0 0;color:#222;-webkit-text-stroke:0.45px #222">Last Distribution</div>
<svg class="a" style="left:2240.0px;top:402.5px" width="14" height="9"><path d="M0 0.5 L13 0.5 L6.5 8.5 Z" fill="#a8a9b0"/></svg>
<div class="t" style="left:2326.24px;top:398.20px;font-size:18.90px;letter-spacing:-0.214px;transform:scaleX(0.9778);transform-origin:0 0;color:#222;-webkit-text-stroke:0.45px #222">Last Report</div>
<svg class="a" style="left:2434.0px;top:402.5px" width="14" height="9"><path d="M0 0.5 L13 0.5 L6.5 8.5 Z" fill="#a8a9b0"/></svg>
<div class="t" style="left:2478.72px;top:398.20px;font-size:18.90px;letter-spacing:-0.250px;transform:scaleX(0.9753);transform-origin:0 0;color:#222;-webkit-text-stroke:0.45px #222">Account Balance</div>
<svg class="a" style="left:2626.0px;top:402.5px" width="14" height="9"><path d="M0 0.5 L13 0.5 L6.5 8.5 Z" fill="#a8a9b0"/></svg>
<div class="t" style="left:2687.13px;top:398.20px;font-size:18.90px;letter-spacing:-0.093px;transform:scaleX(0.9901);transform-origin:0 0;color:#222;-webkit-text-stroke:0.45px #222">LP Portal</div>
<svg class="a" style="left:2775.0px;top:402.5px" width="14" height="9"><path d="M0 0.5 L13 0.5 L6.5 8.5 Z" fill="#a8a9b0"/></svg>
<div class="a" style="left:999px;top:458.0px;width:187px;height:134px;border-radius:7px;overflow:hidden"><svg width="187" height="134" viewBox="0 0 187 134" preserveAspectRatio="none">
<defs><linearGradient id="sk1" x1="0" y1="0" x2="0.2" y2="1"><stop offset="0" stop-color="#3568c8"/><stop offset="0.55" stop-color="#6e9ce2"/><stop offset="1" stop-color="#b4cbec"/></linearGradient></defs>
<rect width="187" height="134" fill="url(#sk1)"/>
<ellipse cx="172" cy="22" rx="22" ry="9" fill="#eef2f9"/><ellipse cx="176" cy="38" rx="14" ry="6" fill="#e2e9f5"/>
<rect x="20" y="92" width="26" height="22" fill="#a9b8d6"/><rect x="30" y="84" width="10" height="10" fill="#c3cee3"/>
<polygon points="48,44 74,11 85,18 85,106 48,101" fill="#6688d8"/>
<g stroke="#a9bce8" stroke-width="1.3"><line x1="56" y1="34" x2="56" y2="102"/><line x1="64" y1="24" x2="64" y2="103"/><line x1="72" y1="14" x2="72" y2="104"/><line x1="48" y1="62" x2="85" y2="48"/><line x1="48" y1="80" x2="85" y2="70"/></g>
<polygon points="85,2 152,38 152,106 85,104" fill="#eef1f7"/>
<g fill="#9fb8e6"><polygon points="89,14 105,22 105,38 89,31"/><polygon points="108,24 126,33 126,48 108,40"/><polygon points="129,35 148,45 148,58 129,50"/>
<polygon points="89,36 105,43 105,58 89,52"/><polygon points="108,45 126,52 126,66 108,60"/><polygon points="129,53 148,60 148,74 129,68"/></g>
<g fill="#75808f"><polygon points="89,57 105,62 105,78 89,74"/><polygon points="108,64 126,69 126,84 108,80"/><polygon points="129,71 148,76 148,90 129,86"/>
<rect x="89" y="82" width="59" height="8"/></g>
<rect x="152" y="40" width="8" height="66" fill="#e6eaf2"/>
<rect x="48" y="100" width="104" height="12" fill="#9aa2b2"/>
<rect x="156" y="70" width="31" height="46" fill="#9a9ea8"/>
<ellipse cx="10" cy="100" rx="10" ry="14" fill="#4a5444"/>
<ellipse cx="168" cy="88" rx="14" ry="18" fill="#434a3c"/>
<rect x="0" y="113" width="187" height="21" fill="#c2c4cc"/>
<rect x="142" y="117" width="42" height="13" rx="5" fill="#2c3450"/>
<rect x="18" y="118" width="5" height="16" fill="#b88a70"/><rect x="112" y="114" width="4" height="18" fill="#e8e8ee"/><rect x="52" y="114" width="4" height="18" fill="#8a7060"/>
</svg></div>
<div class="t" style="left:1203.96px;top:461.94px;font-size:21.80px;letter-spacing:0.190px;color:#1f1f1f;-webkit-text-stroke:0.4px #1f1f1f">111 Madison</div>
<div class="a" style="left:1204px;top:501.3px;width:128px;height:37px;border-radius:6px;background:#e1f5f8;overflow:hidden"><div class="a" style="left:0;bottom:0;width:128px;height:4.5px;background:#c4e8ef"></div><div class="a" style="left:0;bottom:0;width:78px;height:4.5px;background:#2bbec4"></div></div>
<div class="t" style="left:1220.80px;top:508.78px;font-size:17.15px;letter-spacing:0.482px;color:#222;-webkit-text-stroke:0.35px #222">Fundraising</div>
<div class="t" style="left:1699.02px;top:465.39px;font-size:17.73px;letter-spacing:0.400px;color:#2a2a2a">$6M</div>
<div class="t" style="left:1621.32px;top:462.43px;font-size:21.22px;letter-spacing:0.050px;color:#2a2a2a">$4.5M /</div>
<div class="t" style="left:1921.30px;top:463.17px;font-size:20.35px;color:#2a2a2a">-</div>
<div class="t" style="left:2055.40px;top:463.17px;font-size:20.35px;color:#2a2a2a">-</div>
<div class="t" style="left:2248.10px;top:463.17px;font-size:20.35px;color:#2a2a2a">-</div>
<div class="t" style="left:2441.30px;top:463.17px;font-size:20.35px;color:#2a2a2a">-</div>
<div class="t" style="left:2574.56px;top:463.17px;font-size:20.35px;letter-spacing:0.100px;color:#2a2a2a">$4.45M</div>
<div class="a" style="left:2709px;top:468.3px;width:48px;height:21px;border-radius:10.5px;background:#c6e9f0"></div>
<div class="a" style="left:2729.4px;top:463.8px;width:30px;height:30px;border-radius:50%;background:#02b3b8;box-shadow:0 1.5px 3px rgba(0,0,0,0.3)"></div>
<div class="a" style="left:2842.7px;top:463.8px;width:6px;height:6px;border-radius:50%;background:#3c4043"></div>
<div class="a" style="left:2842.7px;top:472.8px;width:6px;height:6px;border-radius:50%;background:#3c4043"></div>
<div class="a" style="left:2842.7px;top:481.8px;width:6px;height:6px;border-radius:50%;background:#3c4043"></div>
<div class="a" style="left:977.5px;top:611.0px;width:1905.5px;height:2px;background:#e9eaee"></div>
<div class="a" style="left:999px;top:633.7px;width:187px;height:134px;border-radius:7px;overflow:hidden"><svg width="187" height="134" viewBox="0 0 187 134" preserveAspectRatio="none">
<defs><linearGradient id="sk2" x1="0" y1="0" x2="0" y2="1"><stop offset="0" stop-color="#2d3590"/><stop offset="1" stop-color="#a4b6d8"/></linearGradient></defs>
<rect width="187" height="134" fill="#2a2727"/>
<polygon points="0,0 56,0 41,36 29,56 0,56" fill="url(#sk2)"/>
<rect x="138" y="0" width="14" height="8" fill="#3a48a0"/>
<rect x="0" y="56" width="30" height="34" fill="#5e626a"/>
<rect x="0" y="62" width="30" height="3" fill="#8a8e96"/>
<polygon points="90,5 134,8 140,34 92,36" fill="#86583c"/>
<polygon points="60,12 78,8 84,30 64,33" fill="#8e5e40"/><polygon points="76,16 94,12 96,32 80,34" fill="#7e5238"/>
<polygon points="62,13 72,11 74,15 64,17" fill="#9fb2d0"/><polygon points="80,17 90,15 91,19 82,21" fill="#9fb2d0"/>
<polygon points="74,30 152,28 154,61 78,62" fill="#7a7f84"/>
<rect x="94" y="45" width="22" height="2" fill="#e6e8ea"/><rect x="120" y="50" width="8" height="2" fill="#d8dadc"/>
<polygon points="88,61 156,60 158,77 90,78" fill="#9a6646"/>
<rect x="57" y="84" width="128" height="38" fill="#8a5c3e"/>
<g fill="#b27c52"><rect x="60" y="88" width="5" height="32"/><rect x="69" y="88" width="5" height="32"/><rect x="78" y="88" width="5" height="32"/><rect x="87" y="88" width="5" height="32"/><rect x="120" y="90" width="12" height="28"/><rect x="138" y="90" width="12" height="28"/><rect x="156" y="92" width="12" height="26"/></g>
<rect x="121" y="79" width="15" height="4" fill="#e8e8e8"/>
<path d="M24 50 Q40 42 58 50 Q70 64 64 86 Q54 100 40 98 Q26 94 24 80 Q20 64 24 50 Z" fill="#6a4a36" opacity="0.75"/>
<path d="M133 0 H187 V92 Q170 96 158 84 Q146 70 150 50 Q140 30 133 0 Z" fill="#1d2622"/>
<g fill="#4e9a3a" opacity="0.7"><circle cx="150" cy="50" r="3"/><circle cx="158" cy="57" r="2.5"/></g>
<rect x="0" y="122" width="187" height="12" fill="#464444"/>
<g fill="#f2f2f2"><circle cx="53" cy="97" r="3"/><circle cx="70" cy="118" r="2.5"/><circle cx="92" cy="118" r="2.5"/><circle cx="133" cy="118" r="2.5"/><circle cx="152" cy="116" r="2.5"/><circle cx="168" cy="116" r="2.5"/><circle cx="181" cy="114" r="2.5"/></g>
<rect x="49" y="110" width="8" height="22" fill="#9aa6b8"/>
</svg></div>
<div class="t" style="left:1203.96px;top:637.64px;font-size:21.80px;letter-spacing:-0.187px;color:#1f1f1f;-webkit-text-stroke:0.4px #1f1f1f">130 5th Ave</div>
<div class="a" style="left:1204px;top:677.0px;width:180px;height:32px;border-radius:6px;background:#e7e8f9"></div>
<div class="t" style="left:1215.74px;top:684.79px;font-size:16.42px;letter-spacing:0.710px;color:#222;-webkit-text-stroke:0.35px #222">Under management</div>
<div class="t" style="left:1699.02px;top:641.09px;font-size:17.73px;letter-spacing:0.400px;color:#2a2a2a">$7M</div>
<div class="t" style="left:1639.04px;top:638.13px;font-size:21.22px;letter-spacing:0.050px;color:#2a2a2a">$7M /</div>
<div class="t" style="left:1868.20px;top:638.87px;font-size:20.35px;letter-spacing:0.100px;color:#2a2a2a">$560K</div>
<div class="t" style="left:2032.51px;top:638.87px;font-size:20.35px;letter-spacing:0.100px;color:#2a2a2a">8%</div>
<div class="t" style="left:2137.22px;top:638.87px;font-size:20.35px;letter-spacing:0.100px;color:#2a2a2a">Apr 30, 2023</div>
<div class="t" style="left:2330.42px;top:638.87px;font-size:20.35px;letter-spacing:0.100px;color:#2a2a2a">Apr 30, 2023</div>
<div class="t" style="left:2582.30px;top:638.87px;font-size:20.35px;letter-spacing:0.100px;color:#2a2a2a">$352K</div>
<div class="a" style="left:2709px;top:644.0px;width:48px;height:21px;border-radius:10.5px;background:#c6e9f0"></div>
<div class="a" style="left:2729.4px;top:639.5px;width:30px;height:30px;border-radius:50%;background:#02b3b8;box-shadow:0 1.5px 3px rgba(0,0,0,0.3)"></div>
<div class="a" style="left:2842.7px;top:639.5px;width:6px;height:6px;border-radius:50%;background:#3c4043"></div>
<div class="a" style="left:2842.7px;top:648.5px;width:6px;height:6px;border-radius:50%;background:#3c4043"></div>
<div class="a" style="left:2842.7px;top:657.5px;width:6px;height:6px;border-radius:50%;background:#3c4043"></div>
<div class="a" style="left:977.5px;top:786.7px;width:1905.5px;height:2px;background:#e9eaee"></div>
<div class="a" style="left:999px;top:809.4px;width:187px;height:134px;border-radius:7px;overflow:hidden"><svg width="187" height="134" viewBox="0 0 187 134" preserveAspectRatio="none">
<rect width="187" height="134" fill="#3e4a64"/>
<rect x="150" y="0" width="37" height="10" fill="#6a7fa8"/>
<g fill="#b4b9c3"><path d="M0 6 L120 4 Q160 6 187 22 L187 42 Q160 28 120 25 L0 27 Z"/>
<path d="M0 34 L110 32 Q150 36 187 54 L187 76 Q150 58 110 56 L0 58 Z"/>
<path d="M0 64 L105 60 Q150 64 187 82 L187 104 Q150 86 105 84 L0 90 Z"/>
<path d="M0 96 L120 94 Q160 96 187 104 L187 130 Q160 118 120 116 L0 120 Z"/></g>
<g fill="#d5d8de"><path d="M0 22 L120 20 Q160 24 187 38 L187 40 Q160 26 120 22 L0 24 Z"/><path d="M0 52 L110 50 Q150 54 187 72 L187 74 Q150 56 110 52 L0 54 Z"/><path d="M0 84 L105 78 Q150 82 187 100 L187 102 Q150 84 105 80 L0 86 Z"/>
<rect x="116" y="84" width="9" height="26"/><rect x="46" y="86" width="7" height="14"/></g>
<g fill="#78b83a">
<path d="M0 0 H80 Q70 10 50 12 Q30 16 0 14 Z"/><path d="M150 2 Q175 -2 187 6 V30 Q170 34 158 22 Z"/>
<path d="M40 26 Q80 18 120 22 Q140 24 150 34 Q160 44 175 52 Q160 56 145 46 Q120 36 90 36 Q60 38 40 34 Z"/>
<path d="M5 34 Q20 30 35 34 Q30 40 10 40 Z"/>
<path d="M0 56 Q20 54 40 58 Q38 70 20 72 Q5 72 0 68 Z"/><path d="M50 60 Q70 56 100 58 Q98 64 80 66 Q60 66 50 64 Z"/>
<path d="M115 60 Q140 60 160 70 Q175 78 187 82 V92 Q170 92 150 80 Q130 72 115 68 Z"/>
<path d="M0 94 Q60 90 110 94 Q100 104 70 104 Q30 106 0 104 Z"/><path d="M125 96 Q150 96 170 104 Q187 108 187 116 Q165 118 140 106 Z"/>
<path d="M0 112 Q30 106 50 116 Q60 134 40 134 H0 Z"/><path d="M70 112 Q95 108 110 120 Q110 134 95 134 H70 Z"/></g>
<g fill="#a4d64c" opacity="0.85"><ellipse cx="45" cy="5" rx="22" ry="4"/><ellipse cx="95" cy="24" rx="22" ry="4"/><ellipse cx="22" cy="60" rx="12" ry="5"/><ellipse cx="50" cy="95" rx="26" ry="3"/><ellipse cx="165" cy="12" rx="10" ry="6"/></g>
</svg></div>
<div class="t" style="left:1203.96px;top:813.34px;font-size:21.80px;letter-spacing:-0.350px;color:#1f1f1f;-webkit-text-stroke:0.4px #1f1f1f">172 15th</div>
<div class="a" style="left:1204px;top:852.7px;width:180px;height:32px;border-radius:6px;background:#e7e8f9"></div>
<div class="t" style="left:1215.74px;top:860.49px;font-size:16.42px;letter-spacing:0.710px;color:#222;-webkit-text-stroke:0.35px #222">Under management</div>
<div class="t" style="left:1683.41px;top:816.79px;font-size:17.73px;letter-spacing:0.400px;color:#2a2a2a">$3.5M</div>
<div class="t" style="left:1605.72px;top:813.83px;font-size:21.22px;letter-spacing:0.050px;color:#2a2a2a">$3.5M /</div>
<div class="t" style="left:1868.20px;top:814.57px;font-size:20.35px;letter-spacing:0.100px;color:#2a2a2a">$318K</div>
<div class="t" style="left:2032.51px;top:814.57px;font-size:20.35px;letter-spacing:0.100px;color:#2a2a2a">7%</div>
<div class="t" style="left:2136.10px;top:814.57px;font-size:20.35px;letter-spacing:0.100px;color:#2a2a2a">Jan 31, 2023</div>
<div class="t" style="left:2329.30px;top:814.57px;font-size:20.35px;letter-spacing:0.100px;color:#2a2a2a">Jan 15, 2023</div>
<div class="t" style="left:2582.30px;top:814.57px;font-size:20.35px;letter-spacing:0.100px;color:#2a2a2a">$189K</div>
<div class="a" style="left:2709px;top:819.7px;width:48px;height:21px;border-radius:10.5px;background:#c6e9f0"></div>
<div class="a" style="left:2729.4px;top:815.2px;width:30px;height:30px;border-radius:50%;background:#02b3b8;box-shadow:0 1.5px 3px rgba(0,0,0,0.3)"></div>
<div class="a" style="left:2842.7px;top:815.2px;width:6px;height:6px;border-radius:50%;background:#3c4043"></div>
<div class="a" style="left:2842.7px;top:824.2px;width:6px;height:6px;border-radius:50%;background:#3c4043"></div>
<div class="a" style="left:2842.7px;top:833.2px;width:6px;height:6px;border-radius:50%;background:#3c4043"></div>
<div class="a" style="left:977.5px;top:962.4px;width:1905.5px;height:2px;background:#e9eaee"></div>
<div class="a" style="left:999px;top:985.1px;width:187px;height:134px;border-radius:7px;overflow:hidden"><svg width="187" height="134" viewBox="0 0 187 134" preserveAspectRatio="none">
<rect width="187" height="134" fill="#9cb8e0"/>
<rect x="0" y="50" width="20" height="84" fill="#abc8da"/>
<polygon points="20,0 114,0 114,134 20,134" fill="#c48a66"/>
<rect x="73" y="0" width="41" height="134" fill="#bf7c56"/>
<polygon points="114,0 120,0 128,5 150,36 152,134 114,134" fill="#d6a584"/>
<g fill="#e6d2be"><rect x="22" y="22" width="51" height="3"/><rect x="22" y="40" width="92" height="4"/><rect x="22" y="64" width="92" height="3"/><polygon points="114,40 150,70 150,74 114,44"/></g>
<g fill="#80848c"><rect x="40" y="10" width="6" height="11"/><rect x="59" y="10" width="11" height="11"/><rect x="84" y="8" width="19" height="13"/>
<rect x="34" y="27" width="5" height="12"/><rect x="41" y="27" width="5" height="12"/><rect x="58" y="27" width="5" height="12"/><rect x="66" y="27" width="5" height="12"/></g>
<path d="M86 40 L86 33 A9 9 0 0 1 104 33 L104 40 Z" fill="#8c9098"/>
<g fill="#3e4c8c"><rect x="23" y="54" width="4" height="10"/><rect x="33" y="54" width="5" height="10"/><rect x="41" y="54" width="5" height="10"/><rect x="50" y="54" width="5" height="10"/><rect x="58" y="54" width="5" height="10"/><rect x="66" y="54" width="5" height="10"/><rect x="87" y="54" width="5" height="10"/><rect x="96" y="54" width="5" height="10"/>
<rect x="34" y="72" width="5" height="12"/><rect x="43" y="72" width="5" height="12"/><rect x="58" y="72" width="5" height="12"/><rect x="67" y="72" width="5" height="12"/><rect x="91" y="74" width="10" height="10"/></g>
<rect x="70" y="41" width="4" height="93" fill="#2a2426"/><rect x="99" y="44" width="5" height="90" fill="#2a2426"/>
<rect x="20" y="21" width="3" height="113" fill="#3a3032"/>
<g fill="#6a5a52"><rect x="140" y="40" width="6" height="10"/><rect x="142" y="64" width="6" height="10"/></g>
</svg></div>
<div class="t" style="left:1204.51px;top:989.04px;font-size:21.80px;letter-spacing:-0.350px;color:#1f1f1f;-webkit-text-stroke:0.4px #1f1f1f">220 Broadway</div>
<div class="a" style="left:1204px;top:1028.4px;width:180px;height:32px;border-radius:6px;background:#e7e8f9"></div>
<div class="t" style="left:1215.74px;top:1036.19px;font-size:16.42px;letter-spacing:0.710px;color:#222;-webkit-text-stroke:0.35px #222">Under management</div>
<div class="t" style="left:1699.02px;top:992.49px;font-size:17.73px;letter-spacing:0.400px;color:#2a2a2a">$3M</div>
<div class="t" style="left:1639.04px;top:989.53px;font-size:21.22px;letter-spacing:0.050px;color:#2a2a2a">$3M /</div>
<div class="t" style="left:1868.20px;top:990.27px;font-size:20.35px;letter-spacing:0.100px;color:#2a2a2a">$450K</div>
<div class="t" style="left:2015.32px;top:990.27px;font-size:20.35px;letter-spacing:0.100px;color:#2a2a2a">7.5%</div>
<div class="t" style="left:2137.22px;top:990.27px;font-size:20.35px;letter-spacing:0.100px;color:#2a2a2a">Apr 30, 2023</div>
<div class="t" style="left:2330.42px;top:990.27px;font-size:20.35px;letter-spacing:0.100px;color:#2a2a2a">Apr 30, 2023</div>
<div class="t" style="left:2582.30px;top:990.27px;font-size:20.35px;letter-spacing:0.100px;color:#2a2a2a">$126K</div>
<div class="a" style="left:2709px;top:995.4px;width:48px;height:21px;border-radius:10.5px;background:#c6e9f0"></div>
<div class="a" style="left:2729.4px;top:990.9px;width:30px;height:30px;border-radius:50%;background:#02b3b8;box-shadow:0 1.5px 3px rgba(0,0,0,0.3)"></div>
<div class="a" style="left:2842.7px;top:990.9px;width:6px;height:6px;border-radius:50%;background:#3c4043"></div>
<div class="a" style="left:2842.7px;top:999.9px;width:6px;height:6px;border-radius:50%;background:#3c4043"></div>
<div class="a" style="left:2842.7px;top:1008.9px;width:6px;height:6px;border-radius:50%;background:#3c4043"></div>
<div class="a" style="left:0;top:860px;width:3840px;height:207px;background:linear-gradient(to bottom,rgba(60,75,95,0),rgba(60,75,95,0.18))"></div>
</body></html>
